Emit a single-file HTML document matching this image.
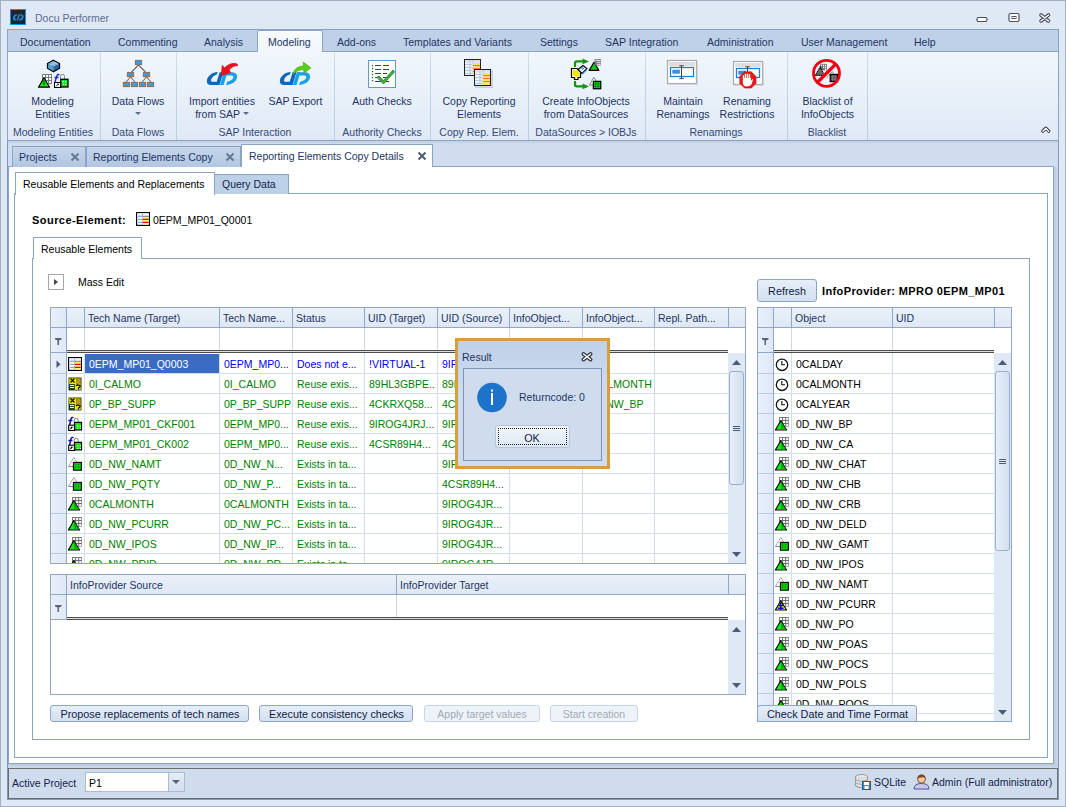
<!DOCTYPE html>
<html><head><meta charset="utf-8"><title>Docu Performer</title>
<style>
html,body{margin:0;padding:0;}
body{width:1066px;height:807px;position:relative;overflow:hidden;font-family:"Liberation Sans", sans-serif;font-size:10.5px;}
body div{position:absolute;}
</style></head><body>
<div style="left:0px;top:0px;width:1066px;height:807px;background:#dfe9f5;"></div>
<div style="left:0px;top:0px;width:1066px;height:807px;box-sizing:border-box;border:1px solid #a3afbd;border-bottom:none;"></div>
<svg style="position:absolute;left:10px;top:9px" width="16" height="16" viewBox="0 0 16 16"><rect x="0.5" y="0.5" width="15" height="15" fill="#1d252d" stroke="#1b8fd6"/><path d="M7 5.2 Q3.6 5.2 3 8.6 Q2.6 11.4 5.2 11.4 L6 11.4 L6.6 9.9 L5.8 9.9 Q4.5 9.9 4.8 8.6 Q5.2 6.8 6.8 6.8 Z" fill="#1f8fe0"/><path d="M8.6 5.2 L6.6 11.4 L8.1 11.4 L10.1 5.2 Z" fill="#1f8fe0"/><path d="M10.3 5.2 Q14 5.2 13.5 8.2 Q13 11.4 9.8 11.4 L9 11.4 L9.5 9.9 Q11.6 9.9 11.9 8.2 Q12.1 6.8 10.6 6.8 Z" fill="#1f8fe0"/></svg>
<div style="left:35px;top:11.86px;font-size:10.5px;line-height:13px;color:#5a6c94;text-align:left;white-space:nowrap;">Docu Performer</div>
<svg style="position:absolute;left:975px;top:12px" width="80" height="14" viewBox="0 0 80 14"><rect x="2" y="5.5" width="10" height="4" rx="1.5" fill="#fff" stroke="#4a4f5c" stroke-width="1.2"/><rect x="34" y="1.5" width="10" height="8" rx="1.5" fill="#fff" stroke="#4a4f5c" stroke-width="1.2"/><rect x="37" y="4.5" width="4" height="2" fill="#fff" stroke="#4a4f5c" stroke-width="1"/><path d="M66 3 L73.5 9 M73.5 3 L66 9" stroke="#4a4f5c" stroke-width="3.6" stroke-linecap="round"/><path d="M66 3 L73.5 9 M73.5 3 L66 9" stroke="#fff" stroke-width="1.5" stroke-linecap="round"/></svg>
<div style="left:7px;top:29px;width:1052px;height:24px;background:#bfd1e8;box-sizing:border-box;border:1px solid #8aa4c6;border-bottom:none;"></div>
<div style="left:7px;top:51px;width:1052px;height:90px;background:linear-gradient(#f1f6fc,#dfe9f5);box-sizing:border-box;border:1px solid #8aa4c6;"></div>
<div style="left:257px;top:30px;width:66px;height:22px;background:linear-gradient(#f7fafd,#f1f6fc);box-sizing:border-box;border:1px solid #8aa4c6;border-bottom:none;border-radius:2px 2px 0 0;"></div>
<div style="left:20px;top:35.86px;font-size:10.5px;line-height:13px;color:#1e3563;text-align:left;white-space:nowrap;">Documentation</div>
<div style="left:118px;top:35.86px;font-size:10.5px;line-height:13px;color:#1e3563;text-align:left;white-space:nowrap;">Commenting</div>
<div style="left:204px;top:35.86px;font-size:10.5px;line-height:13px;color:#1e3563;text-align:left;white-space:nowrap;">Analysis</div>
<div style="left:268px;top:35.86px;font-size:10.5px;line-height:13px;color:#1e3563;text-align:left;white-space:nowrap;">Modeling</div>
<div style="left:337px;top:35.86px;font-size:10.5px;line-height:13px;color:#1e3563;text-align:left;white-space:nowrap;">Add-ons</div>
<div style="left:403px;top:35.86px;font-size:10.5px;line-height:13px;color:#1e3563;text-align:left;white-space:nowrap;">Templates and Variants</div>
<div style="left:540px;top:35.86px;font-size:10.5px;line-height:13px;color:#1e3563;text-align:left;white-space:nowrap;">Settings</div>
<div style="left:605px;top:35.86px;font-size:10.5px;line-height:13px;color:#1e3563;text-align:left;white-space:nowrap;">SAP Integration</div>
<div style="left:707px;top:35.86px;font-size:10.5px;line-height:13px;color:#1e3563;text-align:left;white-space:nowrap;">Administration</div>
<div style="left:801px;top:35.86px;font-size:10.5px;line-height:13px;color:#1e3563;text-align:left;white-space:nowrap;">User Management</div>
<div style="left:914px;top:35.86px;font-size:10.5px;line-height:13px;color:#1e3563;text-align:left;white-space:nowrap;">Help</div>
<div style="left:100px;top:52px;width:1px;height:88px;background:linear-gradient(#d5e0ee,#c3d2e5 30%,#bccde2);"></div>
<div style="left:176px;top:52px;width:1px;height:88px;background:linear-gradient(#d5e0ee,#c3d2e5 30%,#bccde2);"></div>
<div style="left:334px;top:52px;width:1px;height:88px;background:linear-gradient(#d5e0ee,#c3d2e5 30%,#bccde2);"></div>
<div style="left:430px;top:52px;width:1px;height:88px;background:linear-gradient(#d5e0ee,#c3d2e5 30%,#bccde2);"></div>
<div style="left:528px;top:52px;width:1px;height:88px;background:linear-gradient(#d5e0ee,#c3d2e5 30%,#bccde2);"></div>
<div style="left:645px;top:52px;width:1px;height:88px;background:linear-gradient(#d5e0ee,#c3d2e5 30%,#bccde2);"></div>
<div style="left:787px;top:52px;width:1px;height:88px;background:linear-gradient(#d5e0ee,#c3d2e5 30%,#bccde2);"></div>
<div style="left:867px;top:52px;width:1px;height:88px;background:linear-gradient(#d5e0ee,#c3d2e5 30%,#bccde2);"></div>
<div style="left:-97px;top:125.86px;width:300px;font-size:10.5px;line-height:13px;color:#33497a;text-align:center;white-space:nowrap;">Modeling Entities</div>
<div style="left:-12px;top:125.86px;width:300px;font-size:10.5px;line-height:13px;color:#33497a;text-align:center;white-space:nowrap;">Data Flows</div>
<div style="left:105px;top:125.86px;width:300px;font-size:10.5px;line-height:13px;color:#33497a;text-align:center;white-space:nowrap;">SAP Interaction</div>
<div style="left:232px;top:125.86px;width:300px;font-size:10.5px;line-height:13px;color:#33497a;text-align:center;white-space:nowrap;">Authority Checks</div>
<div style="left:329px;top:125.86px;width:300px;font-size:10.5px;line-height:13px;color:#33497a;text-align:center;white-space:nowrap;">Copy Rep. Elem.</div>
<div style="left:436px;top:125.86px;width:300px;font-size:10.5px;line-height:13px;color:#33497a;text-align:center;white-space:nowrap;">DataSources &gt; IOBJs</div>
<div style="left:566px;top:125.86px;width:300px;font-size:10.5px;line-height:13px;color:#33497a;text-align:center;white-space:nowrap;">Renamings</div>
<div style="left:677px;top:125.86px;width:300px;font-size:10.5px;line-height:13px;color:#33497a;text-align:center;white-space:nowrap;">Blacklist</div>
<div style="left:-97.5px;top:94.86px;width:300px;font-size:10.5px;line-height:13px;color:#1d3566;text-align:center;white-space:nowrap;">Modeling</div>
<div style="left:-97.5px;top:107.86px;width:300px;font-size:10.5px;line-height:13px;color:#1d3566;text-align:center;white-space:nowrap;">Entities</div>
<div style="left:-12px;top:94.86px;width:300px;font-size:10.5px;line-height:13px;color:#1d3566;text-align:center;white-space:nowrap;">Data Flows</div>
<svg style="position:absolute;left:134px;top:111px" width="8" height="5" viewBox="0 0 8 5"><path d="M1 1 L7 1 L4 4 Z" fill="#5b6d8c"/></svg>
<div style="left:72px;top:94.86px;width:300px;font-size:10.5px;line-height:13px;color:#1d3566;text-align:center;white-space:nowrap;">Import entities</div>
<div style="left:72px;top:107.86px;width:300px;font-size:10.5px;line-height:13px;color:#1d3566;text-align:center;white-space:nowrap;">from SAP&nbsp;&nbsp;&nbsp;</div>
<svg style="position:absolute;left:242px;top:111px" width="8" height="5" viewBox="0 0 8 5"><path d="M1 1 L7 1 L4 4 Z" fill="#5b6d8c"/></svg>
<div style="left:145.5px;top:94.86px;width:300px;font-size:10.5px;line-height:13px;color:#1d3566;text-align:center;white-space:nowrap;">SAP Export</div>
<div style="left:232px;top:94.86px;width:300px;font-size:10.5px;line-height:13px;color:#1d3566;text-align:center;white-space:nowrap;">Auth Checks</div>
<div style="left:329px;top:94.86px;width:300px;font-size:10.5px;line-height:13px;color:#1d3566;text-align:center;white-space:nowrap;">Copy Reporting</div>
<div style="left:329px;top:107.86px;width:300px;font-size:10.5px;line-height:13px;color:#1d3566;text-align:center;white-space:nowrap;">Elements</div>
<div style="left:436px;top:94.86px;width:300px;font-size:10.5px;line-height:13px;color:#1d3566;text-align:center;white-space:nowrap;">Create InfoObjects</div>
<div style="left:436px;top:107.86px;width:300px;font-size:10.5px;line-height:13px;color:#1d3566;text-align:center;white-space:nowrap;">from DataSources</div>
<div style="left:533px;top:94.86px;width:300px;font-size:10.5px;line-height:13px;color:#1d3566;text-align:center;white-space:nowrap;">Maintain</div>
<div style="left:533px;top:107.86px;width:300px;font-size:10.5px;line-height:13px;color:#1d3566;text-align:center;white-space:nowrap;">Renamings</div>
<div style="left:597px;top:94.86px;width:300px;font-size:10.5px;line-height:13px;color:#1d3566;text-align:center;white-space:nowrap;">Renaming</div>
<div style="left:597px;top:107.86px;width:300px;font-size:10.5px;line-height:13px;color:#1d3566;text-align:center;white-space:nowrap;">Restrictions</div>
<div style="left:677.5px;top:94.86px;width:300px;font-size:10.5px;line-height:13px;color:#1d3566;text-align:center;white-space:nowrap;">Blacklist of</div>
<div style="left:677.5px;top:107.86px;width:300px;font-size:10.5px;line-height:13px;color:#1d3566;text-align:center;white-space:nowrap;">InfoObjects</div>
<svg style="position:absolute;left:1039px;top:123px" width="14" height="12" viewBox="0 0 14 12"><path d="M3.8 8.2 L6.8 5.2 L9.8 8.2" fill="none" stroke="#2a2f3a" stroke-width="3.2" stroke-linecap="round" stroke-linejoin="round"/><path d="M3.8 8.2 L6.8 5.2 L9.8 8.2" fill="none" stroke="#fff" stroke-width="1.3" stroke-linecap="round" stroke-linejoin="round"/></svg>
<div style="left:7px;top:141px;width:1052px;height:659px;background:#d0ddee;box-sizing:border-box;border-left:1px solid #7f99bb;border-right:1px solid #7f99bb;border-bottom:1px solid #7f99bb;"></div>
<div style="left:8px;top:141px;width:1050px;height:3px;background:linear-gradient(#c0cee2,#d0ddee);"></div>
<div style="left:8px;top:166px;width:1046px;height:598px;background:#fff;box-sizing:border-box;border:1px solid #8aa4c6;"></div>
<div style="left:1054px;top:167px;width:4px;height:601px;background:linear-gradient(90deg,#b9c8dc,#cddaea);"></div>
<div style="left:8px;top:764px;width:1050px;height:4px;background:linear-gradient(#b9c8dc,#cddaea);"></div>
<div style="left:12px;top:146px;width:74px;height:21px;background:linear-gradient(#c6d7ec,#b1c6e1);box-sizing:border-box;border:1px solid #8aa4c6;border-bottom:none;"></div>
<div style="left:19px;top:150.86px;font-size:10.5px;line-height:13px;color:#1e3563;text-align:left;white-space:nowrap;">Projects</div>
<svg style="position:absolute;left:70px;top:152px" width="11" height="11" viewBox="0 0 11 11"><path d="M1.5 1.5 L8.5 8.5 M8.5 1.5 L1.5 8.5" stroke="#6a778c" stroke-width="2"/></svg>
<div style="left:86px;top:146px;width:155px;height:21px;background:linear-gradient(#c6d7ec,#b1c6e1);box-sizing:border-box;border:1px solid #8aa4c6;border-bottom:none;"></div>
<div style="left:93px;top:150.86px;font-size:10.5px;line-height:13px;color:#1e3563;text-align:left;white-space:nowrap;">Reporting Elements Copy</div>
<svg style="position:absolute;left:225px;top:152px" width="11" height="11" viewBox="0 0 11 11"><path d="M1.5 1.5 L8.5 8.5 M8.5 1.5 L1.5 8.5" stroke="#6a778c" stroke-width="2"/></svg>
<div style="left:241px;top:144px;width:192px;height:23px;background:#fff;box-sizing:border-box;border:1px solid #8aa4c6;border-bottom:none;"></div>
<div style="left:249px;top:149.86px;font-size:10.5px;line-height:13px;color:#1e3563;text-align:left;white-space:nowrap;">Reporting Elements Copy Details</div>
<svg style="position:absolute;left:417px;top:151px" width="11" height="11" viewBox="0 0 11 11"><path d="M1.5 1.5 L8.5 8.5 M8.5 1.5 L1.5 8.5" stroke="#505b6e" stroke-width="2"/></svg>
<div style="left:14px;top:193px;width:1034px;height:565px;box-sizing:border-box;border:1px solid #8aa4c6;"></div>
<div style="left:15px;top:172px;width:200px;height:23px;background:#fff;box-sizing:border-box;border:1px solid #8aa4c6;border-bottom:none;"></div>
<div style="left:23px;top:177.86px;font-size:10.5px;line-height:13px;color:#000;text-align:left;white-space:nowrap;">Reusable Elements and Replacements</div>
<div style="left:214px;top:174px;width:75px;height:20px;background:#bcd0e8;box-sizing:border-box;border:1px solid #8aa4c6;border-bottom:none;"></div>
<div style="left:222px;top:177.86px;font-size:10.5px;line-height:13px;color:#15234a;text-align:left;white-space:nowrap;">Query Data</div>
<div style="left:32px;top:213.69px;font-size:11px;line-height:13px;color:#000;text-align:left;white-space:nowrap;font-weight:bold;letter-spacing:0.45px;">Source-Element:</div>
<div style="left:153px;top:213.86px;font-size:10.5px;line-height:13px;color:#000;text-align:left;white-space:nowrap;">0EPM_MP01_Q0001</div>
<div style="left:32px;top:258px;width:998px;height:482px;box-sizing:border-box;border:1px solid #8aa4c6;"></div>
<div style="left:33px;top:237px;width:109px;height:22px;background:#fff;box-sizing:border-box;border:1px solid #8aa4c6;border-bottom:none;"></div>
<div style="left:41px;top:242.86px;font-size:10.5px;line-height:13px;color:#000;text-align:left;white-space:nowrap;">Reusable Elements</div>
<div style="left:48px;top:274px;width:16px;height:16px;box-sizing:border-box;border:1px solid #a7a7a7;background:#fff;"></div>
<svg style="position:absolute;left:48px;top:274px" width="16" height="16" viewBox="0 0 16 16"><path d="M6 5 L10 8 L6 11 Z" fill="#444"/></svg>
<div style="left:78px;top:275.86px;font-size:10.5px;line-height:13px;color:#000;text-align:left;white-space:nowrap;">Mass Edit</div>
<div style="left:757px;top:279px;width:60px;height:23px;box-sizing:border-box;border:1px solid #8ea6c6;border-radius:3px;background:linear-gradient(#e6eef8,#d3e0f0);"></div>
<div style="left:637px;top:284.76px;width:300px;font-size:10.8px;line-height:13px;color:#101c44;text-align:center;white-space:nowrap;">Refresh</div>
<div style="left:822px;top:284.69px;font-size:11px;line-height:13px;color:#000;text-align:left;white-space:nowrap;font-weight:bold;letter-spacing:0.38px;">InfoProvider: MPRO 0EPM_MP01</div>
<div style="left:0;top:0;width:1066px;height:564px;overflow:hidden;">
<div style="left:50px;top:307px;width:696px;height:257px;background:#fff;"></div>
<div style="left:50px;top:307px;width:696px;height:21px;background:linear-gradient(#ebf1fa,#dde7f4);"></div>
<div style="left:50px;top:307px;width:16px;height:257px;background:linear-gradient(90deg,#e9f0fa,#dfe8f5);"></div>
<div style="left:84px;top:327px;width:1px;height:23px;background:#d6d6d6;"></div>
<div style="left:219px;top:327px;width:1px;height:23px;background:#d6d6d6;"></div>
<div style="left:292px;top:327px;width:1px;height:23px;background:#d6d6d6;"></div>
<div style="left:364px;top:327px;width:1px;height:23px;background:#d6d6d6;"></div>
<div style="left:437px;top:327px;width:1px;height:23px;background:#d6d6d6;"></div>
<div style="left:509px;top:327px;width:1px;height:23px;background:#d6d6d6;"></div>
<div style="left:582px;top:327px;width:1px;height:23px;background:#d6d6d6;"></div>
<div style="left:654px;top:327px;width:1px;height:23px;background:#d6d6d6;"></div>
<div style="left:66px;top:350px;width:662px;height:1px;background:#4c4c4c;"></div>
<div style="left:66px;top:351px;width:662px;height:1px;background:#e0e0e0;"></div>
<div style="left:66px;top:352px;width:662px;height:1px;background:#4c4c4c;"></div>
<svg style="position:absolute;left:55px;top:338px" width="8" height="8" viewBox="0 0 8 8"><path d="M0 0 H6.5 V1.4 L4 2.6 V7 H2.5 V2.6 L0 1.4 Z" fill="#5a6478"/></svg>
<div style="left:66px;top:373px;width:662px;height:1px;background:#d3deeb;"></div>
<div style="left:50px;top:373px;width:16px;height:1px;background:#b9cbe2;"></div>
<div style="left:66px;top:393px;width:662px;height:1px;background:#d3deeb;"></div>
<div style="left:50px;top:393px;width:16px;height:1px;background:#b9cbe2;"></div>
<div style="left:66px;top:413px;width:662px;height:1px;background:#d3deeb;"></div>
<div style="left:50px;top:413px;width:16px;height:1px;background:#b9cbe2;"></div>
<div style="left:66px;top:433px;width:662px;height:1px;background:#d3deeb;"></div>
<div style="left:50px;top:433px;width:16px;height:1px;background:#b9cbe2;"></div>
<div style="left:66px;top:453px;width:662px;height:1px;background:#d3deeb;"></div>
<div style="left:50px;top:453px;width:16px;height:1px;background:#b9cbe2;"></div>
<div style="left:66px;top:473px;width:662px;height:1px;background:#d3deeb;"></div>
<div style="left:50px;top:473px;width:16px;height:1px;background:#b9cbe2;"></div>
<div style="left:66px;top:493px;width:662px;height:1px;background:#d3deeb;"></div>
<div style="left:50px;top:493px;width:16px;height:1px;background:#b9cbe2;"></div>
<div style="left:66px;top:513px;width:662px;height:1px;background:#d3deeb;"></div>
<div style="left:50px;top:513px;width:16px;height:1px;background:#b9cbe2;"></div>
<div style="left:66px;top:533px;width:662px;height:1px;background:#d3deeb;"></div>
<div style="left:50px;top:533px;width:16px;height:1px;background:#b9cbe2;"></div>
<div style="left:66px;top:553px;width:662px;height:1px;background:#d3deeb;"></div>
<div style="left:50px;top:553px;width:16px;height:1px;background:#b9cbe2;"></div>
<div style="left:50px;top:353px;width:16px;height:0px;"></div>
<div style="left:84px;top:353px;width:1px;height:211px;background:#d3deeb;"></div>
<div style="left:219px;top:353px;width:1px;height:211px;background:#d3deeb;"></div>
<div style="left:292px;top:353px;width:1px;height:211px;background:#d3deeb;"></div>
<div style="left:364px;top:353px;width:1px;height:211px;background:#d3deeb;"></div>
<div style="left:437px;top:353px;width:1px;height:211px;background:#d3deeb;"></div>
<div style="left:509px;top:353px;width:1px;height:211px;background:#d3deeb;"></div>
<div style="left:582px;top:353px;width:1px;height:211px;background:#d3deeb;"></div>
<div style="left:654px;top:353px;width:1px;height:211px;background:#d3deeb;"></div>
<div style="left:50px;top:327px;width:696px;height:1px;background:#8fa8c9;"></div>
<div style="left:66px;top:307px;width:1px;height:20px;background:#8fa8c9;"></div>
<div style="left:84px;top:307px;width:1px;height:20px;background:#8fa8c9;"></div>
<div style="left:219px;top:307px;width:1px;height:20px;background:#8fa8c9;"></div>
<div style="left:292px;top:307px;width:1px;height:20px;background:#8fa8c9;"></div>
<div style="left:364px;top:307px;width:1px;height:20px;background:#8fa8c9;"></div>
<div style="left:437px;top:307px;width:1px;height:20px;background:#8fa8c9;"></div>
<div style="left:509px;top:307px;width:1px;height:20px;background:#8fa8c9;"></div>
<div style="left:582px;top:307px;width:1px;height:20px;background:#8fa8c9;"></div>
<div style="left:654px;top:307px;width:1px;height:20px;background:#8fa8c9;"></div>
<div style="left:728px;top:307px;width:1px;height:20px;background:#8fa8c9;"></div>
<div style="left:66px;top:327px;width:1px;height:237px;background:#8fa8c9;"></div>
<div style="left:50px;top:352px;width:16px;height:1px;background:#8fa8c9;"></div>
<div style="left:70px;top:311.86px;font-size:10.5px;line-height:13px;color:#1e3563;text-align:left;white-space:nowrap;"></div>
<div style="left:88px;top:311.86px;font-size:10.5px;line-height:13px;color:#1e3563;text-align:left;white-space:nowrap;">Tech Name (Target)</div>
<div style="left:223px;top:311.86px;font-size:10.5px;line-height:13px;color:#1e3563;text-align:left;white-space:nowrap;">Tech Name...</div>
<div style="left:296px;top:311.86px;font-size:10.5px;line-height:13px;color:#1e3563;text-align:left;white-space:nowrap;">Status</div>
<div style="left:368px;top:311.86px;font-size:10.5px;line-height:13px;color:#1e3563;text-align:left;white-space:nowrap;">UID (Target)</div>
<div style="left:441px;top:311.86px;font-size:10.5px;line-height:13px;color:#1e3563;text-align:left;white-space:nowrap;">UID (Source)</div>
<div style="left:513px;top:311.86px;font-size:10.5px;line-height:13px;color:#1e3563;text-align:left;white-space:nowrap;">InfoObject...</div>
<div style="left:586px;top:311.86px;font-size:10.5px;line-height:13px;color:#1e3563;text-align:left;white-space:nowrap;">InfoObject...</div>
<div style="left:658px;top:311.86px;font-size:10.5px;line-height:13px;color:#1e3563;text-align:left;white-space:nowrap;">Repl. Path...</div>
<div style="left:728px;top:328px;width:17px;height:25px;background:#fff;"></div>
<div style="left:728px;top:353px;width:17px;height:211px;background:#dfe9f6;"></div>
<svg style="position:absolute;left:731px;top:359px" width="11" height="7" viewBox="0 0 11 7"><path d="M1 6 L5.5 1 L10 6 Z" fill="#4b5b78"/></svg>
<svg style="position:absolute;left:731px;top:551px" width="11" height="7" viewBox="0 0 11 7"><path d="M1 1 L5.5 6 L10 1 Z" fill="#4b5b78"/></svg>
<div style="left:729px;top:371px;width:15px;height:114px;box-sizing:border-box;border:1px solid #98afcd;border-radius:3px;background:linear-gradient(90deg,#e7eef8,#d3dfef);"></div>
<svg style="position:absolute;left:732px;top:425px" width="9" height="7" viewBox="0 0 9 7"><path d="M1 1.5 H8 M1 3.5 H8 M1 5.5 H8" stroke="#4b5b78" stroke-width="1"/></svg>
<svg style="position:absolute;left:66px;top:354px" width="18" height="18" viewBox="0 0 18 18"><rect x="2.6" y="3.6" width="12.8" height="12.8" fill="#fff" stroke="#000" stroke-width="1.2"/><rect x="3.3" y="4.3" width="11.4" height="3" fill="#e4f0fa"/><path d="M4 7.3 H8.4 M4 10.4 H8.4 M4 13.4 H8.4" stroke="#6a8cc8" stroke-width="0.9"/><path d="M8.5 4.3 V16" stroke="#8aa8d8" stroke-width="0.8"/><rect x="8.8" y="7.5" width="5.9" height="8.2" fill="#fbf07a"/><path d="M8.8 7.4 H14.7" stroke="#777" stroke-width="0.9"/><path d="M8.8 10.4 H14.7 M8.8 13.4 H14.7" stroke="#f00000" stroke-width="1.1"/></svg>
<div style="left:85px;top:354px;width:134px;height:19px;background:#3b6cc4;"></div>
<svg style="position:absolute;left:55px;top:360px" width="8" height="10" viewBox="0 0 8 10"><path d="M1.5 0.5 L5.5 4.2 L1.5 8 Z" fill="#4f5a70"/></svg>
<div style="left:84px;top:353px;width:134px;height:20px;overflow:hidden;">
<div style="left:5px;top:4.86px;font-size:10.5px;line-height:13px;color:#fff;text-align:left;white-space:nowrap;">0EPM_MP01_Q0003</div>
</div>
<div style="left:219px;top:353px;width:72px;height:20px;overflow:hidden;">
<div style="left:5px;top:4.86px;font-size:10.5px;line-height:13px;color:#0000f0;text-align:left;white-space:nowrap;">0EPM_MP0...</div>
</div>
<div style="left:292px;top:353px;width:71px;height:20px;overflow:hidden;">
<div style="left:5px;top:4.86px;font-size:10.5px;line-height:13px;color:#0000f0;text-align:left;white-space:nowrap;">Does not e...</div>
</div>
<div style="left:364px;top:353px;width:72px;height:20px;overflow:hidden;">
<div style="left:5px;top:4.86px;font-size:10.5px;line-height:13px;color:#0000f0;text-align:left;white-space:nowrap;">!VIRTUAL-1</div>
</div>
<div style="left:437px;top:353px;width:71px;height:20px;overflow:hidden;">
<div style="left:5px;top:4.86px;font-size:10.5px;line-height:13px;color:#0000f0;text-align:left;white-space:nowrap;">9IROG4JR...</div>
</div>
<svg style="position:absolute;left:66px;top:374px" width="18" height="18" viewBox="0 0 18 18"><rect x="2.6" y="3.6" width="12.8" height="12.8" fill="#000"/><rect x="3.2" y="4.2" width="7" height="6" fill="#f4ec00"/><rect x="10.2" y="4.2" width="4.6" height="6" fill="#b89c00"/><rect x="3.2" y="10.2" width="5.6" height="5.6" fill="#1f5010"/><rect x="8.8" y="10.2" width="6" height="5.6" fill="#f4ec00"/><path d="M4.5 4.5 L8.5 8.5 M8.5 4.5 L4.5 8.5" stroke="#000" stroke-width="1.1"/><path d="M4 11.5 H8 M4 13.5 H8" stroke="#fff" stroke-width="0.9"/><path d="M10 12 L11.5 11 L14 11.5 L14 13 L12.5 14 V15.5" fill="none" stroke="#000" stroke-width="1.2"/></svg>
<div style="left:84px;top:373px;width:134px;height:20px;overflow:hidden;">
<div style="left:5px;top:4.86px;font-size:10.5px;line-height:13px;color:#008000;text-align:left;white-space:nowrap;">0I_CALMO</div>
</div>
<div style="left:219px;top:373px;width:72px;height:20px;overflow:hidden;">
<div style="left:5px;top:4.86px;font-size:10.5px;line-height:13px;color:#008000;text-align:left;white-space:nowrap;">0I_CALMO</div>
</div>
<div style="left:292px;top:373px;width:71px;height:20px;overflow:hidden;">
<div style="left:5px;top:4.86px;font-size:10.5px;line-height:13px;color:#008000;text-align:left;white-space:nowrap;">Reuse exis...</div>
</div>
<div style="left:364px;top:373px;width:72px;height:20px;overflow:hidden;">
<div style="left:5px;top:4.86px;font-size:10.5px;line-height:13px;color:#008000;text-align:left;white-space:nowrap;">89HL3GBPE...</div>
</div>
<div style="left:437px;top:373px;width:71px;height:20px;overflow:hidden;">
<div style="left:5px;top:4.86px;font-size:10.5px;line-height:13px;color:#008000;text-align:left;white-space:nowrap;">89HL3GBPE...</div>
</div>
<div style="left:582px;top:373px;width:71px;height:20px;overflow:hidden;">
<div style="left:5px;top:4.86px;font-size:10.5px;line-height:13px;color:#008000;text-align:left;white-space:nowrap;">0CALMONTH</div>
</div>
<svg style="position:absolute;left:66px;top:394px" width="18" height="18" viewBox="0 0 18 18"><rect x="2.6" y="3.6" width="12.8" height="12.8" fill="#000"/><rect x="3.2" y="4.2" width="7" height="6" fill="#f4ec00"/><rect x="10.2" y="4.2" width="4.6" height="6" fill="#b89c00"/><rect x="3.2" y="10.2" width="5.6" height="5.6" fill="#1f5010"/><rect x="8.8" y="10.2" width="6" height="5.6" fill="#f4ec00"/><path d="M4.5 4.5 L8.5 8.5 M8.5 4.5 L4.5 8.5" stroke="#000" stroke-width="1.1"/><path d="M4 11.5 H8 M4 13.5 H8" stroke="#fff" stroke-width="0.9"/><path d="M10 12 L11.5 11 L14 11.5 L14 13 L12.5 14 V15.5" fill="none" stroke="#000" stroke-width="1.2"/></svg>
<div style="left:84px;top:393px;width:134px;height:20px;overflow:hidden;">
<div style="left:5px;top:4.86px;font-size:10.5px;line-height:13px;color:#008000;text-align:left;white-space:nowrap;">0P_BP_SUPP</div>
</div>
<div style="left:219px;top:393px;width:72px;height:20px;overflow:hidden;">
<div style="left:5px;top:4.86px;font-size:10.5px;line-height:13px;color:#008000;text-align:left;white-space:nowrap;">0P_BP_SUPP</div>
</div>
<div style="left:292px;top:393px;width:71px;height:20px;overflow:hidden;">
<div style="left:5px;top:4.86px;font-size:10.5px;line-height:13px;color:#008000;text-align:left;white-space:nowrap;">Reuse exis...</div>
</div>
<div style="left:364px;top:393px;width:72px;height:20px;overflow:hidden;">
<div style="left:5px;top:4.86px;font-size:10.5px;line-height:13px;color:#008000;text-align:left;white-space:nowrap;">4CKRXQ58...</div>
</div>
<div style="left:437px;top:393px;width:71px;height:20px;overflow:hidden;">
<div style="left:5px;top:4.86px;font-size:10.5px;line-height:13px;color:#008000;text-align:left;white-space:nowrap;">4CKRXQ58...</div>
</div>
<div style="left:582px;top:393px;width:71px;height:20px;overflow:hidden;">
<div style="left:5px;top:4.86px;font-size:10.5px;line-height:13px;color:#008000;text-align:left;white-space:nowrap;">0D_NW_BP</div>
</div>
<svg style="position:absolute;left:66px;top:414px" width="18" height="18" viewBox="0 0 18 18"><path d="M8.2 11 V6.5 Q8.2 4.2 10.2 4.2 Q12.2 4.2 12.2 6.5 V9" fill="none" stroke="#777" stroke-width="1"/><path d="M7.6 3.6 Q5.2 2.8 4.8 5.5 L3.6 11 M2.3 6.6 H6.4" fill="none" stroke="#1010b0" stroke-width="1.5"/><rect x="2.7" y="11.2" width="5.8" height="5.3" fill="#fff" stroke="#000" stroke-width="1.1"/><path d="M4.4 14.8 L6.4 12.8" stroke="#000" stroke-width="1.3"/><rect x="8.6" y="8.4" width="6.9" height="7.5" fill="#18f018" stroke="#000" stroke-width="1.2"/><path d="M11.4 11.4 h1 v1 h-1z M14 11.4 h1 v1 h-1z M11.4 14 h1 v1 h-1z M14 14 h1 v1 h-1z" fill="#fff"/></svg>
<div style="left:84px;top:413px;width:134px;height:20px;overflow:hidden;">
<div style="left:5px;top:4.86px;font-size:10.5px;line-height:13px;color:#008000;text-align:left;white-space:nowrap;">0EPM_MP01_CKF001</div>
</div>
<div style="left:219px;top:413px;width:72px;height:20px;overflow:hidden;">
<div style="left:5px;top:4.86px;font-size:10.5px;line-height:13px;color:#008000;text-align:left;white-space:nowrap;">0EPM_MP0...</div>
</div>
<div style="left:292px;top:413px;width:71px;height:20px;overflow:hidden;">
<div style="left:5px;top:4.86px;font-size:10.5px;line-height:13px;color:#008000;text-align:left;white-space:nowrap;">Reuse exis...</div>
</div>
<div style="left:364px;top:413px;width:72px;height:20px;overflow:hidden;">
<div style="left:5px;top:4.86px;font-size:10.5px;line-height:13px;color:#008000;text-align:left;white-space:nowrap;">9IROG4JRJ...</div>
</div>
<div style="left:437px;top:413px;width:71px;height:20px;overflow:hidden;">
<div style="left:5px;top:4.86px;font-size:10.5px;line-height:13px;color:#008000;text-align:left;white-space:nowrap;">9IROG4JRJ...</div>
</div>
<svg style="position:absolute;left:66px;top:434px" width="18" height="18" viewBox="0 0 18 18"><path d="M8.2 11 V6.5 Q8.2 4.2 10.2 4.2 Q12.2 4.2 12.2 6.5 V9" fill="none" stroke="#777" stroke-width="1"/><path d="M7.6 3.6 Q5.2 2.8 4.8 5.5 L3.6 11 M2.3 6.6 H6.4" fill="none" stroke="#1010b0" stroke-width="1.5"/><rect x="2.7" y="11.2" width="5.8" height="5.3" fill="#fff" stroke="#000" stroke-width="1.1"/><path d="M4.4 14.8 L6.4 12.8" stroke="#000" stroke-width="1.3"/><rect x="8.6" y="8.4" width="6.9" height="7.5" fill="#18f018" stroke="#000" stroke-width="1.2"/><path d="M11.4 11.4 h1 v1 h-1z M14 11.4 h1 v1 h-1z M11.4 14 h1 v1 h-1z M14 14 h1 v1 h-1z" fill="#fff"/></svg>
<div style="left:84px;top:433px;width:134px;height:20px;overflow:hidden;">
<div style="left:5px;top:4.86px;font-size:10.5px;line-height:13px;color:#008000;text-align:left;white-space:nowrap;">0EPM_MP01_CK002</div>
</div>
<div style="left:219px;top:433px;width:72px;height:20px;overflow:hidden;">
<div style="left:5px;top:4.86px;font-size:10.5px;line-height:13px;color:#008000;text-align:left;white-space:nowrap;">0EPM_MP0...</div>
</div>
<div style="left:292px;top:433px;width:71px;height:20px;overflow:hidden;">
<div style="left:5px;top:4.86px;font-size:10.5px;line-height:13px;color:#008000;text-align:left;white-space:nowrap;">Reuse exis...</div>
</div>
<div style="left:364px;top:433px;width:72px;height:20px;overflow:hidden;">
<div style="left:5px;top:4.86px;font-size:10.5px;line-height:13px;color:#008000;text-align:left;white-space:nowrap;">4CSR89H4...</div>
</div>
<div style="left:437px;top:433px;width:71px;height:20px;overflow:hidden;">
<div style="left:5px;top:4.86px;font-size:10.5px;line-height:13px;color:#008000;text-align:left;white-space:nowrap;">4CSR89H4...</div>
</div>
<svg style="position:absolute;left:66px;top:454px" width="18" height="18" viewBox="0 0 18 18"><path d="M2.4 12.5 L7.9 3.4 L11 8.5" fill="#fff" stroke="#8a8a8a" stroke-width="1" stroke-dasharray="1.4 0.5"/><path d="M2.4 12.5 H7" stroke="#8a8a8a" stroke-width="1"/><rect x="7.4" y="8.4" width="8" height="7.8" fill="#00dc00" stroke="#000" stroke-width="1.1"/><path d="M9.6 9 V15.6 M12.5 9 V15.6 M8 10.3 H14.8 M8 12.8 H14.8" stroke="#0a9a0a" stroke-width="0.7"/></svg>
<div style="left:84px;top:453px;width:134px;height:20px;overflow:hidden;">
<div style="left:5px;top:4.86px;font-size:10.5px;line-height:13px;color:#008000;text-align:left;white-space:nowrap;">0D_NW_NAMT</div>
</div>
<div style="left:219px;top:453px;width:72px;height:20px;overflow:hidden;">
<div style="left:5px;top:4.86px;font-size:10.5px;line-height:13px;color:#008000;text-align:left;white-space:nowrap;">0D_NW_N...</div>
</div>
<div style="left:292px;top:453px;width:71px;height:20px;overflow:hidden;">
<div style="left:5px;top:4.86px;font-size:10.5px;line-height:13px;color:#008000;text-align:left;white-space:nowrap;">Exists in ta...</div>
</div>
<div style="left:437px;top:453px;width:71px;height:20px;overflow:hidden;">
<div style="left:5px;top:4.86px;font-size:10.5px;line-height:13px;color:#008000;text-align:left;white-space:nowrap;">9IROG4JR...</div>
</div>
<svg style="position:absolute;left:66px;top:474px" width="18" height="18" viewBox="0 0 18 18"><path d="M2.4 12.5 L7.9 3.4 L11 8.5" fill="#fff" stroke="#8a8a8a" stroke-width="1" stroke-dasharray="1.4 0.5"/><path d="M2.4 12.5 H7" stroke="#8a8a8a" stroke-width="1"/><rect x="7.4" y="8.4" width="8" height="7.8" fill="#00dc00" stroke="#000" stroke-width="1.1"/><path d="M9.6 9 V15.6 M12.5 9 V15.6 M8 10.3 H14.8 M8 12.8 H14.8" stroke="#0a9a0a" stroke-width="0.7"/></svg>
<div style="left:84px;top:473px;width:134px;height:20px;overflow:hidden;">
<div style="left:5px;top:4.86px;font-size:10.5px;line-height:13px;color:#008000;text-align:left;white-space:nowrap;">0D_NW_PQTY</div>
</div>
<div style="left:219px;top:473px;width:72px;height:20px;overflow:hidden;">
<div style="left:5px;top:4.86px;font-size:10.5px;line-height:13px;color:#008000;text-align:left;white-space:nowrap;">0D_NW_P...</div>
</div>
<div style="left:292px;top:473px;width:71px;height:20px;overflow:hidden;">
<div style="left:5px;top:4.86px;font-size:10.5px;line-height:13px;color:#008000;text-align:left;white-space:nowrap;">Exists in ta...</div>
</div>
<div style="left:437px;top:473px;width:71px;height:20px;overflow:hidden;">
<div style="left:5px;top:4.86px;font-size:10.5px;line-height:13px;color:#008000;text-align:left;white-space:nowrap;">4CSR89H4...</div>
</div>
<svg style="position:absolute;left:66px;top:494px" width="18" height="18" viewBox="0 0 18 18"><rect x="6.1" y="3.1" width="9.8" height="9.5" fill="#6e6e6e"/><rect x="7.0" y="4.0" width="2.1" height="2" fill="#fff"/><rect x="7.0" y="7.0" width="2.1" height="2" fill="#fff"/><rect x="7.0" y="10.0" width="2.1" height="2" fill="#fff"/><rect x="10.1" y="4.0" width="2.1" height="2" fill="#fff"/><rect x="10.1" y="7.0" width="2.1" height="2" fill="#fff"/><rect x="10.1" y="10.0" width="2.1" height="2" fill="#fff"/><rect x="13.2" y="4.0" width="2.1" height="2" fill="#fff"/><rect x="13.2" y="7.0" width="2.1" height="2" fill="#fff"/><rect x="13.2" y="10.0" width="2.1" height="2" fill="#fff"/><path d="M2.4 16 L7.7 6.8 L13.6 16 Z" fill="#00f000" stroke="#000" stroke-width="1.2" stroke-linejoin="round"/><path d="M8 7.8 L13 15.4 H8 Z" fill="#00a800"/><path d="M4 15 H12.5 M5 13.6 H11" stroke="#8ab88a" stroke-width="0.7" stroke-dasharray="0.8 0.8"/></svg>
<div style="left:84px;top:493px;width:134px;height:20px;overflow:hidden;">
<div style="left:5px;top:4.86px;font-size:10.5px;line-height:13px;color:#008000;text-align:left;white-space:nowrap;">0CALMONTH</div>
</div>
<div style="left:219px;top:493px;width:72px;height:20px;overflow:hidden;">
<div style="left:5px;top:4.86px;font-size:10.5px;line-height:13px;color:#008000;text-align:left;white-space:nowrap;">0CALMONTH</div>
</div>
<div style="left:292px;top:493px;width:71px;height:20px;overflow:hidden;">
<div style="left:5px;top:4.86px;font-size:10.5px;line-height:13px;color:#008000;text-align:left;white-space:nowrap;">Exists in ta...</div>
</div>
<div style="left:437px;top:493px;width:71px;height:20px;overflow:hidden;">
<div style="left:5px;top:4.86px;font-size:10.5px;line-height:13px;color:#008000;text-align:left;white-space:nowrap;">9IROG4JR...</div>
</div>
<svg style="position:absolute;left:66px;top:514px" width="18" height="18" viewBox="0 0 18 18"><rect x="6.1" y="3.1" width="9.8" height="9.5" fill="#6e6e6e"/><rect x="7.0" y="4.0" width="2.1" height="2" fill="#fff"/><rect x="7.0" y="7.0" width="2.1" height="2" fill="#fff"/><rect x="7.0" y="10.0" width="2.1" height="2" fill="#fff"/><rect x="10.1" y="4.0" width="2.1" height="2" fill="#fff"/><rect x="10.1" y="7.0" width="2.1" height="2" fill="#fff"/><rect x="10.1" y="10.0" width="2.1" height="2" fill="#fff"/><rect x="13.2" y="4.0" width="2.1" height="2" fill="#fff"/><rect x="13.2" y="7.0" width="2.1" height="2" fill="#fff"/><rect x="13.2" y="10.0" width="2.1" height="2" fill="#fff"/><path d="M2.4 16 L7.7 6.8 L13.6 16 Z" fill="#00f000" stroke="#000" stroke-width="1.2" stroke-linejoin="round"/><path d="M8 7.8 L13 15.4 H8 Z" fill="#00a800"/><path d="M4 15 H12.5 M5 13.6 H11" stroke="#8ab88a" stroke-width="0.7" stroke-dasharray="0.8 0.8"/></svg>
<div style="left:84px;top:513px;width:134px;height:20px;overflow:hidden;">
<div style="left:5px;top:4.86px;font-size:10.5px;line-height:13px;color:#008000;text-align:left;white-space:nowrap;">0D_NW_PCURR</div>
</div>
<div style="left:219px;top:513px;width:72px;height:20px;overflow:hidden;">
<div style="left:5px;top:4.86px;font-size:10.5px;line-height:13px;color:#008000;text-align:left;white-space:nowrap;">0D_NW_PC...</div>
</div>
<div style="left:292px;top:513px;width:71px;height:20px;overflow:hidden;">
<div style="left:5px;top:4.86px;font-size:10.5px;line-height:13px;color:#008000;text-align:left;white-space:nowrap;">Exists in ta...</div>
</div>
<div style="left:437px;top:513px;width:71px;height:20px;overflow:hidden;">
<div style="left:5px;top:4.86px;font-size:10.5px;line-height:13px;color:#008000;text-align:left;white-space:nowrap;">9IROG4JR...</div>
</div>
<svg style="position:absolute;left:66px;top:534px" width="18" height="18" viewBox="0 0 18 18"><rect x="6.1" y="3.1" width="9.8" height="9.5" fill="#6e6e6e"/><rect x="7.0" y="4.0" width="2.1" height="2" fill="#fff"/><rect x="7.0" y="7.0" width="2.1" height="2" fill="#fff"/><rect x="7.0" y="10.0" width="2.1" height="2" fill="#fff"/><rect x="10.1" y="4.0" width="2.1" height="2" fill="#fff"/><rect x="10.1" y="7.0" width="2.1" height="2" fill="#fff"/><rect x="10.1" y="10.0" width="2.1" height="2" fill="#fff"/><rect x="13.2" y="4.0" width="2.1" height="2" fill="#fff"/><rect x="13.2" y="7.0" width="2.1" height="2" fill="#fff"/><rect x="13.2" y="10.0" width="2.1" height="2" fill="#fff"/><path d="M2.4 16 L7.7 6.8 L13.6 16 Z" fill="#00f000" stroke="#000" stroke-width="1.2" stroke-linejoin="round"/><path d="M8 7.8 L13 15.4 H8 Z" fill="#00a800"/><path d="M4 15 H12.5 M5 13.6 H11" stroke="#8ab88a" stroke-width="0.7" stroke-dasharray="0.8 0.8"/></svg>
<div style="left:84px;top:533px;width:134px;height:20px;overflow:hidden;">
<div style="left:5px;top:4.86px;font-size:10.5px;line-height:13px;color:#008000;text-align:left;white-space:nowrap;">0D_NW_IPOS</div>
</div>
<div style="left:219px;top:533px;width:72px;height:20px;overflow:hidden;">
<div style="left:5px;top:4.86px;font-size:10.5px;line-height:13px;color:#008000;text-align:left;white-space:nowrap;">0D_NW_IP...</div>
</div>
<div style="left:292px;top:533px;width:71px;height:20px;overflow:hidden;">
<div style="left:5px;top:4.86px;font-size:10.5px;line-height:13px;color:#008000;text-align:left;white-space:nowrap;">Exists in ta...</div>
</div>
<div style="left:437px;top:533px;width:71px;height:20px;overflow:hidden;">
<div style="left:5px;top:4.86px;font-size:10.5px;line-height:13px;color:#008000;text-align:left;white-space:nowrap;">9IROG4JR...</div>
</div>
<svg style="position:absolute;left:66px;top:554px" width="18" height="18" viewBox="0 0 18 18"><rect x="6.1" y="3.1" width="9.8" height="9.5" fill="#6e6e6e"/><rect x="7.0" y="4.0" width="2.1" height="2" fill="#fff"/><rect x="7.0" y="7.0" width="2.1" height="2" fill="#fff"/><rect x="7.0" y="10.0" width="2.1" height="2" fill="#fff"/><rect x="10.1" y="4.0" width="2.1" height="2" fill="#fff"/><rect x="10.1" y="7.0" width="2.1" height="2" fill="#fff"/><rect x="10.1" y="10.0" width="2.1" height="2" fill="#fff"/><rect x="13.2" y="4.0" width="2.1" height="2" fill="#fff"/><rect x="13.2" y="7.0" width="2.1" height="2" fill="#fff"/><rect x="13.2" y="10.0" width="2.1" height="2" fill="#fff"/><path d="M2.4 16 L7.7 6.8 L13.6 16 Z" fill="#00f000" stroke="#000" stroke-width="1.2" stroke-linejoin="round"/><path d="M8 7.8 L13 15.4 H8 Z" fill="#00a800"/><path d="M4 15 H12.5 M5 13.6 H11" stroke="#8ab88a" stroke-width="0.7" stroke-dasharray="0.8 0.8"/></svg>
<div style="left:84px;top:553px;width:134px;height:20px;overflow:hidden;">
<div style="left:5px;top:4.86px;font-size:10.5px;line-height:13px;color:#008000;text-align:left;white-space:nowrap;">0D_NW_PRID</div>
</div>
<div style="left:219px;top:553px;width:72px;height:20px;overflow:hidden;">
<div style="left:5px;top:4.86px;font-size:10.5px;line-height:13px;color:#008000;text-align:left;white-space:nowrap;">0D_NW_PR...</div>
</div>
<div style="left:292px;top:553px;width:71px;height:20px;overflow:hidden;">
<div style="left:5px;top:4.86px;font-size:10.5px;line-height:13px;color:#008000;text-align:left;white-space:nowrap;">Exists in ta...</div>
</div>
<div style="left:437px;top:553px;width:71px;height:20px;overflow:hidden;">
<div style="left:5px;top:4.86px;font-size:10.5px;line-height:13px;color:#008000;text-align:left;white-space:nowrap;">9IROG4JR...</div>
</div>
<div style="left:50px;top:307px;width:696px;height:257px;box-sizing:border-box;border:1px solid #8fa8c9;"></div>
</div>
<div style="left:50px;top:574px;width:696px;height:121px;background:#fff;"></div>
<div style="left:50px;top:574px;width:696px;height:21px;background:linear-gradient(#ebf1fa,#dde7f4);"></div>
<div style="left:50px;top:574px;width:16px;height:46px;background:linear-gradient(90deg,#e9f0fa,#dfe8f5);"></div>
<div style="left:396px;top:594px;width:1px;height:23px;background:#d6d6d6;"></div>
<div style="left:66px;top:617px;width:662px;height:1px;background:#4c4c4c;"></div>
<div style="left:66px;top:618px;width:662px;height:1px;background:#e0e0e0;"></div>
<div style="left:66px;top:619px;width:662px;height:1px;background:#4c4c4c;"></div>
<svg style="position:absolute;left:55px;top:605px" width="8" height="8" viewBox="0 0 8 8"><path d="M0 0 H6.5 V1.4 L4 2.6 V7 H2.5 V2.6 L0 1.4 Z" fill="#5a6478"/></svg>
<div style="left:50px;top:620px;width:16px;height:0px;"></div>
<div style="left:50px;top:594px;width:696px;height:1px;background:#8fa8c9;"></div>
<div style="left:66px;top:574px;width:1px;height:20px;background:#8fa8c9;"></div>
<div style="left:396px;top:574px;width:1px;height:20px;background:#8fa8c9;"></div>
<div style="left:728px;top:574px;width:1px;height:20px;background:#8fa8c9;"></div>
<div style="left:66px;top:594px;width:1px;height:26px;background:#8fa8c9;"></div>
<div style="left:50px;top:619px;width:16px;height:1px;background:#8fa8c9;"></div>
<div style="left:70px;top:578.86px;font-size:10.5px;line-height:13px;color:#1e3563;text-align:left;white-space:nowrap;">InfoProvider Source</div>
<div style="left:400px;top:578.86px;font-size:10.5px;line-height:13px;color:#1e3563;text-align:left;white-space:nowrap;">InfoProvider Target</div>
<div style="left:728px;top:595px;width:17px;height:25px;background:#fff;"></div>
<div style="left:728px;top:620px;width:17px;height:75px;background:#dfe9f6;"></div>
<svg style="position:absolute;left:731px;top:626px" width="11" height="7" viewBox="0 0 11 7"><path d="M1 6 L5.5 1 L10 6 Z" fill="#4b5b78"/></svg>
<svg style="position:absolute;left:731px;top:682px" width="11" height="7" viewBox="0 0 11 7"><path d="M1 1 L5.5 6 L10 1 Z" fill="#4b5b78"/></svg>
<div style="left:50px;top:574px;width:696px;height:121px;box-sizing:border-box;border:1px solid #8fa8c9;"></div>
<div style="left:0;top:0;width:1066px;height:722px;overflow:hidden;">
<div style="left:757px;top:307px;width:255px;height:415px;background:#fff;"></div>
<div style="left:757px;top:307px;width:255px;height:21px;background:linear-gradient(#ebf1fa,#dde7f4);"></div>
<div style="left:757px;top:307px;width:16px;height:415px;background:linear-gradient(90deg,#e9f0fa,#dfe8f5);"></div>
<div style="left:791px;top:327px;width:1px;height:23px;background:#d6d6d6;"></div>
<div style="left:892px;top:327px;width:1px;height:23px;background:#d6d6d6;"></div>
<div style="left:773px;top:350px;width:221px;height:1px;background:#4c4c4c;"></div>
<div style="left:773px;top:351px;width:221px;height:1px;background:#e0e0e0;"></div>
<div style="left:773px;top:352px;width:221px;height:1px;background:#4c4c4c;"></div>
<svg style="position:absolute;left:762px;top:338px" width="8" height="8" viewBox="0 0 8 8"><path d="M0 0 H6.5 V1.4 L4 2.6 V7 H2.5 V2.6 L0 1.4 Z" fill="#5a6478"/></svg>
<div style="left:773px;top:373px;width:221px;height:1px;background:#d3deeb;"></div>
<div style="left:757px;top:373px;width:16px;height:1px;background:#b9cbe2;"></div>
<div style="left:773px;top:393px;width:221px;height:1px;background:#d3deeb;"></div>
<div style="left:757px;top:393px;width:16px;height:1px;background:#b9cbe2;"></div>
<div style="left:773px;top:413px;width:221px;height:1px;background:#d3deeb;"></div>
<div style="left:757px;top:413px;width:16px;height:1px;background:#b9cbe2;"></div>
<div style="left:773px;top:433px;width:221px;height:1px;background:#d3deeb;"></div>
<div style="left:757px;top:433px;width:16px;height:1px;background:#b9cbe2;"></div>
<div style="left:773px;top:453px;width:221px;height:1px;background:#d3deeb;"></div>
<div style="left:757px;top:453px;width:16px;height:1px;background:#b9cbe2;"></div>
<div style="left:773px;top:473px;width:221px;height:1px;background:#d3deeb;"></div>
<div style="left:757px;top:473px;width:16px;height:1px;background:#b9cbe2;"></div>
<div style="left:773px;top:493px;width:221px;height:1px;background:#d3deeb;"></div>
<div style="left:757px;top:493px;width:16px;height:1px;background:#b9cbe2;"></div>
<div style="left:773px;top:513px;width:221px;height:1px;background:#d3deeb;"></div>
<div style="left:757px;top:513px;width:16px;height:1px;background:#b9cbe2;"></div>
<div style="left:773px;top:533px;width:221px;height:1px;background:#d3deeb;"></div>
<div style="left:757px;top:533px;width:16px;height:1px;background:#b9cbe2;"></div>
<div style="left:773px;top:553px;width:221px;height:1px;background:#d3deeb;"></div>
<div style="left:757px;top:553px;width:16px;height:1px;background:#b9cbe2;"></div>
<div style="left:773px;top:573px;width:221px;height:1px;background:#d3deeb;"></div>
<div style="left:757px;top:573px;width:16px;height:1px;background:#b9cbe2;"></div>
<div style="left:773px;top:593px;width:221px;height:1px;background:#d3deeb;"></div>
<div style="left:757px;top:593px;width:16px;height:1px;background:#b9cbe2;"></div>
<div style="left:773px;top:613px;width:221px;height:1px;background:#d3deeb;"></div>
<div style="left:757px;top:613px;width:16px;height:1px;background:#b9cbe2;"></div>
<div style="left:773px;top:633px;width:221px;height:1px;background:#d3deeb;"></div>
<div style="left:757px;top:633px;width:16px;height:1px;background:#b9cbe2;"></div>
<div style="left:773px;top:653px;width:221px;height:1px;background:#d3deeb;"></div>
<div style="left:757px;top:653px;width:16px;height:1px;background:#b9cbe2;"></div>
<div style="left:773px;top:673px;width:221px;height:1px;background:#d3deeb;"></div>
<div style="left:757px;top:673px;width:16px;height:1px;background:#b9cbe2;"></div>
<div style="left:773px;top:693px;width:221px;height:1px;background:#d3deeb;"></div>
<div style="left:757px;top:693px;width:16px;height:1px;background:#b9cbe2;"></div>
<div style="left:773px;top:713px;width:221px;height:1px;background:#d3deeb;"></div>
<div style="left:757px;top:713px;width:16px;height:1px;background:#b9cbe2;"></div>
<div style="left:757px;top:353px;width:16px;height:0px;"></div>
<div style="left:791px;top:353px;width:1px;height:369px;background:#d3deeb;"></div>
<div style="left:892px;top:353px;width:1px;height:369px;background:#d3deeb;"></div>
<div style="left:757px;top:327px;width:255px;height:1px;background:#8fa8c9;"></div>
<div style="left:773px;top:307px;width:1px;height:20px;background:#8fa8c9;"></div>
<div style="left:791px;top:307px;width:1px;height:20px;background:#8fa8c9;"></div>
<div style="left:892px;top:307px;width:1px;height:20px;background:#8fa8c9;"></div>
<div style="left:994px;top:307px;width:1px;height:20px;background:#8fa8c9;"></div>
<div style="left:773px;top:327px;width:1px;height:395px;background:#8fa8c9;"></div>
<div style="left:757px;top:352px;width:16px;height:1px;background:#8fa8c9;"></div>
<div style="left:777px;top:311.86px;font-size:10.5px;line-height:13px;color:#1e3563;text-align:left;white-space:nowrap;"></div>
<div style="left:795px;top:311.86px;font-size:10.5px;line-height:13px;color:#1e3563;text-align:left;white-space:nowrap;">Object</div>
<div style="left:896px;top:311.86px;font-size:10.5px;line-height:13px;color:#1e3563;text-align:left;white-space:nowrap;">UID</div>
<div style="left:994px;top:328px;width:17px;height:25px;background:#fff;"></div>
<div style="left:994px;top:353px;width:17px;height:369px;background:#dfe9f6;"></div>
<svg style="position:absolute;left:997px;top:359px" width="11" height="7" viewBox="0 0 11 7"><path d="M1 6 L5.5 1 L10 6 Z" fill="#4b5b78"/></svg>
<svg style="position:absolute;left:997px;top:709px" width="11" height="7" viewBox="0 0 11 7"><path d="M1 1 L5.5 6 L10 1 Z" fill="#4b5b78"/></svg>
<div style="left:995px;top:371px;width:15px;height:180px;box-sizing:border-box;border:1px solid #98afcd;border-radius:3px;background:linear-gradient(90deg,#e7eef8,#d3dfef);"></div>
<svg style="position:absolute;left:998px;top:458px" width="9" height="7" viewBox="0 0 9 7"><path d="M1 1.5 H8 M1 3.5 H8 M1 5.5 H8" stroke="#4b5b78" stroke-width="1"/></svg>
<svg style="position:absolute;left:773px;top:354px" width="18" height="18" viewBox="0 0 18 18"><circle cx="9" cy="10.8" r="5.7" fill="#fff" stroke="#111" stroke-width="1.3"/><path d="M8.8 7 V10.8 H12" fill="none" stroke="#111" stroke-width="1.1"/></svg>
<div style="left:791px;top:353px;width:100px;height:20px;overflow:hidden;">
<div style="left:5px;top:4.86px;font-size:10.5px;line-height:13px;color:#000;text-align:left;white-space:nowrap;">0CALDAY</div>
</div>
<svg style="position:absolute;left:773px;top:374px" width="18" height="18" viewBox="0 0 18 18"><circle cx="9" cy="10.8" r="5.7" fill="#fff" stroke="#111" stroke-width="1.3"/><path d="M8.8 7 V10.8 H12" fill="none" stroke="#111" stroke-width="1.1"/></svg>
<div style="left:791px;top:373px;width:100px;height:20px;overflow:hidden;">
<div style="left:5px;top:4.86px;font-size:10.5px;line-height:13px;color:#000;text-align:left;white-space:nowrap;">0CALMONTH</div>
</div>
<svg style="position:absolute;left:773px;top:394px" width="18" height="18" viewBox="0 0 18 18"><circle cx="9" cy="10.8" r="5.7" fill="#fff" stroke="#111" stroke-width="1.3"/><path d="M8.8 7 V10.8 H12" fill="none" stroke="#111" stroke-width="1.1"/></svg>
<div style="left:791px;top:393px;width:100px;height:20px;overflow:hidden;">
<div style="left:5px;top:4.86px;font-size:10.5px;line-height:13px;color:#000;text-align:left;white-space:nowrap;">0CALYEAR</div>
</div>
<svg style="position:absolute;left:773px;top:414px" width="18" height="18" viewBox="0 0 18 18"><rect x="6.1" y="3.1" width="9.8" height="9.5" fill="#6e6e6e"/><rect x="7.0" y="4.0" width="2.1" height="2" fill="#fff"/><rect x="7.0" y="7.0" width="2.1" height="2" fill="#fff"/><rect x="7.0" y="10.0" width="2.1" height="2" fill="#fff"/><rect x="10.1" y="4.0" width="2.1" height="2" fill="#fff"/><rect x="10.1" y="7.0" width="2.1" height="2" fill="#fff"/><rect x="10.1" y="10.0" width="2.1" height="2" fill="#fff"/><rect x="13.2" y="4.0" width="2.1" height="2" fill="#fff"/><rect x="13.2" y="7.0" width="2.1" height="2" fill="#fff"/><rect x="13.2" y="10.0" width="2.1" height="2" fill="#fff"/><path d="M2.4 16 L7.7 6.8 L13.6 16 Z" fill="#00f000" stroke="#000" stroke-width="1.2" stroke-linejoin="round"/><path d="M8 7.8 L13 15.4 H8 Z" fill="#00a800"/><path d="M4 15 H12.5 M5 13.6 H11" stroke="#8ab88a" stroke-width="0.7" stroke-dasharray="0.8 0.8"/></svg>
<div style="left:791px;top:413px;width:100px;height:20px;overflow:hidden;">
<div style="left:5px;top:4.86px;font-size:10.5px;line-height:13px;color:#000;text-align:left;white-space:nowrap;">0D_NW_BP</div>
</div>
<svg style="position:absolute;left:773px;top:434px" width="18" height="18" viewBox="0 0 18 18"><rect x="6.1" y="3.1" width="9.8" height="9.5" fill="#6e6e6e"/><rect x="7.0" y="4.0" width="2.1" height="2" fill="#fff"/><rect x="7.0" y="7.0" width="2.1" height="2" fill="#fff"/><rect x="7.0" y="10.0" width="2.1" height="2" fill="#fff"/><rect x="10.1" y="4.0" width="2.1" height="2" fill="#fff"/><rect x="10.1" y="7.0" width="2.1" height="2" fill="#fff"/><rect x="10.1" y="10.0" width="2.1" height="2" fill="#fff"/><rect x="13.2" y="4.0" width="2.1" height="2" fill="#fff"/><rect x="13.2" y="7.0" width="2.1" height="2" fill="#fff"/><rect x="13.2" y="10.0" width="2.1" height="2" fill="#fff"/><path d="M2.4 16 L7.7 6.8 L13.6 16 Z" fill="#00f000" stroke="#000" stroke-width="1.2" stroke-linejoin="round"/><path d="M8 7.8 L13 15.4 H8 Z" fill="#00a800"/><path d="M4 15 H12.5 M5 13.6 H11" stroke="#8ab88a" stroke-width="0.7" stroke-dasharray="0.8 0.8"/></svg>
<div style="left:791px;top:433px;width:100px;height:20px;overflow:hidden;">
<div style="left:5px;top:4.86px;font-size:10.5px;line-height:13px;color:#000;text-align:left;white-space:nowrap;">0D_NW_CA</div>
</div>
<svg style="position:absolute;left:773px;top:454px" width="18" height="18" viewBox="0 0 18 18"><rect x="6.1" y="3.1" width="9.8" height="9.5" fill="#6e6e6e"/><rect x="7.0" y="4.0" width="2.1" height="2" fill="#fff"/><rect x="7.0" y="7.0" width="2.1" height="2" fill="#fff"/><rect x="7.0" y="10.0" width="2.1" height="2" fill="#fff"/><rect x="10.1" y="4.0" width="2.1" height="2" fill="#fff"/><rect x="10.1" y="7.0" width="2.1" height="2" fill="#fff"/><rect x="10.1" y="10.0" width="2.1" height="2" fill="#fff"/><rect x="13.2" y="4.0" width="2.1" height="2" fill="#fff"/><rect x="13.2" y="7.0" width="2.1" height="2" fill="#fff"/><rect x="13.2" y="10.0" width="2.1" height="2" fill="#fff"/><path d="M2.4 16 L7.7 6.8 L13.6 16 Z" fill="#00f000" stroke="#000" stroke-width="1.2" stroke-linejoin="round"/><path d="M8 7.8 L13 15.4 H8 Z" fill="#00a800"/><path d="M4 15 H12.5 M5 13.6 H11" stroke="#8ab88a" stroke-width="0.7" stroke-dasharray="0.8 0.8"/></svg>
<div style="left:791px;top:453px;width:100px;height:20px;overflow:hidden;">
<div style="left:5px;top:4.86px;font-size:10.5px;line-height:13px;color:#000;text-align:left;white-space:nowrap;">0D_NW_CHAT</div>
</div>
<svg style="position:absolute;left:773px;top:474px" width="18" height="18" viewBox="0 0 18 18"><rect x="6.1" y="3.1" width="9.8" height="9.5" fill="#6e6e6e"/><rect x="7.0" y="4.0" width="2.1" height="2" fill="#fff"/><rect x="7.0" y="7.0" width="2.1" height="2" fill="#fff"/><rect x="7.0" y="10.0" width="2.1" height="2" fill="#fff"/><rect x="10.1" y="4.0" width="2.1" height="2" fill="#fff"/><rect x="10.1" y="7.0" width="2.1" height="2" fill="#fff"/><rect x="10.1" y="10.0" width="2.1" height="2" fill="#fff"/><rect x="13.2" y="4.0" width="2.1" height="2" fill="#fff"/><rect x="13.2" y="7.0" width="2.1" height="2" fill="#fff"/><rect x="13.2" y="10.0" width="2.1" height="2" fill="#fff"/><path d="M2.4 16 L7.7 6.8 L13.6 16 Z" fill="#00f000" stroke="#000" stroke-width="1.2" stroke-linejoin="round"/><path d="M8 7.8 L13 15.4 H8 Z" fill="#00a800"/><path d="M4 15 H12.5 M5 13.6 H11" stroke="#8ab88a" stroke-width="0.7" stroke-dasharray="0.8 0.8"/></svg>
<div style="left:791px;top:473px;width:100px;height:20px;overflow:hidden;">
<div style="left:5px;top:4.86px;font-size:10.5px;line-height:13px;color:#000;text-align:left;white-space:nowrap;">0D_NW_CHB</div>
</div>
<svg style="position:absolute;left:773px;top:494px" width="18" height="18" viewBox="0 0 18 18"><rect x="6.1" y="3.1" width="9.8" height="9.5" fill="#6e6e6e"/><rect x="7.0" y="4.0" width="2.1" height="2" fill="#fff"/><rect x="7.0" y="7.0" width="2.1" height="2" fill="#fff"/><rect x="7.0" y="10.0" width="2.1" height="2" fill="#fff"/><rect x="10.1" y="4.0" width="2.1" height="2" fill="#fff"/><rect x="10.1" y="7.0" width="2.1" height="2" fill="#fff"/><rect x="10.1" y="10.0" width="2.1" height="2" fill="#fff"/><rect x="13.2" y="4.0" width="2.1" height="2" fill="#fff"/><rect x="13.2" y="7.0" width="2.1" height="2" fill="#fff"/><rect x="13.2" y="10.0" width="2.1" height="2" fill="#fff"/><path d="M2.4 16 L7.7 6.8 L13.6 16 Z" fill="#00f000" stroke="#000" stroke-width="1.2" stroke-linejoin="round"/><path d="M8 7.8 L13 15.4 H8 Z" fill="#00a800"/><path d="M4 15 H12.5 M5 13.6 H11" stroke="#8ab88a" stroke-width="0.7" stroke-dasharray="0.8 0.8"/></svg>
<div style="left:791px;top:493px;width:100px;height:20px;overflow:hidden;">
<div style="left:5px;top:4.86px;font-size:10.5px;line-height:13px;color:#000;text-align:left;white-space:nowrap;">0D_NW_CRB</div>
</div>
<svg style="position:absolute;left:773px;top:514px" width="18" height="18" viewBox="0 0 18 18"><rect x="6.1" y="3.1" width="9.8" height="9.5" fill="#6e6e6e"/><rect x="7.0" y="4.0" width="2.1" height="2" fill="#fff"/><rect x="7.0" y="7.0" width="2.1" height="2" fill="#fff"/><rect x="7.0" y="10.0" width="2.1" height="2" fill="#fff"/><rect x="10.1" y="4.0" width="2.1" height="2" fill="#fff"/><rect x="10.1" y="7.0" width="2.1" height="2" fill="#fff"/><rect x="10.1" y="10.0" width="2.1" height="2" fill="#fff"/><rect x="13.2" y="4.0" width="2.1" height="2" fill="#fff"/><rect x="13.2" y="7.0" width="2.1" height="2" fill="#fff"/><rect x="13.2" y="10.0" width="2.1" height="2" fill="#fff"/><path d="M2.4 16 L7.7 6.8 L13.6 16 Z" fill="#00f000" stroke="#000" stroke-width="1.2" stroke-linejoin="round"/><path d="M8 7.8 L13 15.4 H8 Z" fill="#00a800"/><path d="M4 15 H12.5 M5 13.6 H11" stroke="#8ab88a" stroke-width="0.7" stroke-dasharray="0.8 0.8"/></svg>
<div style="left:791px;top:513px;width:100px;height:20px;overflow:hidden;">
<div style="left:5px;top:4.86px;font-size:10.5px;line-height:13px;color:#000;text-align:left;white-space:nowrap;">0D_NW_DELD</div>
</div>
<svg style="position:absolute;left:773px;top:534px" width="18" height="18" viewBox="0 0 18 18"><path d="M2.4 12.5 L7.9 3.4 L11 8.5" fill="#fff" stroke="#8a8a8a" stroke-width="1" stroke-dasharray="1.4 0.5"/><path d="M2.4 12.5 H7" stroke="#8a8a8a" stroke-width="1"/><rect x="7.4" y="8.4" width="8" height="7.8" fill="#00dc00" stroke="#000" stroke-width="1.1"/><path d="M9.6 9 V15.6 M12.5 9 V15.6 M8 10.3 H14.8 M8 12.8 H14.8" stroke="#0a9a0a" stroke-width="0.7"/></svg>
<div style="left:791px;top:533px;width:100px;height:20px;overflow:hidden;">
<div style="left:5px;top:4.86px;font-size:10.5px;line-height:13px;color:#000;text-align:left;white-space:nowrap;">0D_NW_GAMT</div>
</div>
<svg style="position:absolute;left:773px;top:554px" width="18" height="18" viewBox="0 0 18 18"><rect x="6.1" y="3.1" width="9.8" height="9.5" fill="#6e6e6e"/><rect x="7.0" y="4.0" width="2.1" height="2" fill="#fff"/><rect x="7.0" y="7.0" width="2.1" height="2" fill="#fff"/><rect x="7.0" y="10.0" width="2.1" height="2" fill="#fff"/><rect x="10.1" y="4.0" width="2.1" height="2" fill="#fff"/><rect x="10.1" y="7.0" width="2.1" height="2" fill="#fff"/><rect x="10.1" y="10.0" width="2.1" height="2" fill="#fff"/><rect x="13.2" y="4.0" width="2.1" height="2" fill="#fff"/><rect x="13.2" y="7.0" width="2.1" height="2" fill="#fff"/><rect x="13.2" y="10.0" width="2.1" height="2" fill="#fff"/><path d="M2.4 16 L7.7 6.8 L13.6 16 Z" fill="#00f000" stroke="#000" stroke-width="1.2" stroke-linejoin="round"/><path d="M8 7.8 L13 15.4 H8 Z" fill="#00a800"/><path d="M4 15 H12.5 M5 13.6 H11" stroke="#8ab88a" stroke-width="0.7" stroke-dasharray="0.8 0.8"/></svg>
<div style="left:791px;top:553px;width:100px;height:20px;overflow:hidden;">
<div style="left:5px;top:4.86px;font-size:10.5px;line-height:13px;color:#000;text-align:left;white-space:nowrap;">0D_NW_IPOS</div>
</div>
<svg style="position:absolute;left:773px;top:574px" width="18" height="18" viewBox="0 0 18 18"><path d="M2.4 12.5 L7.9 3.4 L11 8.5" fill="#fff" stroke="#8a8a8a" stroke-width="1" stroke-dasharray="1.4 0.5"/><path d="M2.4 12.5 H7" stroke="#8a8a8a" stroke-width="1"/><rect x="7.4" y="8.4" width="8" height="7.8" fill="#00dc00" stroke="#000" stroke-width="1.1"/><path d="M9.6 9 V15.6 M12.5 9 V15.6 M8 10.3 H14.8 M8 12.8 H14.8" stroke="#0a9a0a" stroke-width="0.7"/></svg>
<div style="left:791px;top:573px;width:100px;height:20px;overflow:hidden;">
<div style="left:5px;top:4.86px;font-size:10.5px;line-height:13px;color:#000;text-align:left;white-space:nowrap;">0D_NW_NAMT</div>
</div>
<svg style="position:absolute;left:773px;top:594px" width="18" height="18" viewBox="0 0 18 18"><rect x="6.1" y="3.1" width="9.8" height="9.5" fill="#6e6e6e"/><rect x="7.0" y="4.0" width="2.1" height="2" fill="#fff"/><rect x="7.0" y="7.0" width="2.1" height="2" fill="#fff"/><rect x="7.0" y="10.0" width="2.1" height="2" fill="#fff"/><rect x="10.1" y="4.0" width="2.1" height="2" fill="#fff"/><rect x="10.1" y="7.0" width="2.1" height="2" fill="#fff"/><rect x="10.1" y="10.0" width="2.1" height="2" fill="#fff"/><rect x="13.2" y="4.0" width="2.1" height="2" fill="#fff"/><rect x="13.2" y="7.0" width="2.1" height="2" fill="#fff"/><rect x="13.2" y="10.0" width="2.1" height="2" fill="#fff"/><path d="M2.4 16 L7.7 6.8 L13.6 16 Z" fill="#f8f000" stroke="#000" stroke-width="1.2" stroke-linejoin="round"/><path d="M7.7 8.5 V15.8 M5.5 11.5 H10.3 M5 14.3 H10.5" stroke="#0000f0" stroke-width="1.6"/></svg>
<div style="left:791px;top:593px;width:100px;height:20px;overflow:hidden;">
<div style="left:5px;top:4.86px;font-size:10.5px;line-height:13px;color:#000;text-align:left;white-space:nowrap;">0D_NW_PCURR</div>
</div>
<svg style="position:absolute;left:773px;top:614px" width="18" height="18" viewBox="0 0 18 18"><rect x="6.1" y="3.1" width="9.8" height="9.5" fill="#6e6e6e"/><rect x="7.0" y="4.0" width="2.1" height="2" fill="#fff"/><rect x="7.0" y="7.0" width="2.1" height="2" fill="#fff"/><rect x="7.0" y="10.0" width="2.1" height="2" fill="#fff"/><rect x="10.1" y="4.0" width="2.1" height="2" fill="#fff"/><rect x="10.1" y="7.0" width="2.1" height="2" fill="#fff"/><rect x="10.1" y="10.0" width="2.1" height="2" fill="#fff"/><rect x="13.2" y="4.0" width="2.1" height="2" fill="#fff"/><rect x="13.2" y="7.0" width="2.1" height="2" fill="#fff"/><rect x="13.2" y="10.0" width="2.1" height="2" fill="#fff"/><path d="M2.4 16 L7.7 6.8 L13.6 16 Z" fill="#00f000" stroke="#000" stroke-width="1.2" stroke-linejoin="round"/><path d="M8 7.8 L13 15.4 H8 Z" fill="#00a800"/><path d="M4 15 H12.5 M5 13.6 H11" stroke="#8ab88a" stroke-width="0.7" stroke-dasharray="0.8 0.8"/></svg>
<div style="left:791px;top:613px;width:100px;height:20px;overflow:hidden;">
<div style="left:5px;top:4.86px;font-size:10.5px;line-height:13px;color:#000;text-align:left;white-space:nowrap;">0D_NW_PO</div>
</div>
<svg style="position:absolute;left:773px;top:634px" width="18" height="18" viewBox="0 0 18 18"><rect x="6.1" y="3.1" width="9.8" height="9.5" fill="#6e6e6e"/><rect x="7.0" y="4.0" width="2.1" height="2" fill="#fff"/><rect x="7.0" y="7.0" width="2.1" height="2" fill="#fff"/><rect x="7.0" y="10.0" width="2.1" height="2" fill="#fff"/><rect x="10.1" y="4.0" width="2.1" height="2" fill="#fff"/><rect x="10.1" y="7.0" width="2.1" height="2" fill="#fff"/><rect x="10.1" y="10.0" width="2.1" height="2" fill="#fff"/><rect x="13.2" y="4.0" width="2.1" height="2" fill="#fff"/><rect x="13.2" y="7.0" width="2.1" height="2" fill="#fff"/><rect x="13.2" y="10.0" width="2.1" height="2" fill="#fff"/><path d="M2.4 16 L7.7 6.8 L13.6 16 Z" fill="#00f000" stroke="#000" stroke-width="1.2" stroke-linejoin="round"/><path d="M8 7.8 L13 15.4 H8 Z" fill="#00a800"/><path d="M4 15 H12.5 M5 13.6 H11" stroke="#8ab88a" stroke-width="0.7" stroke-dasharray="0.8 0.8"/></svg>
<div style="left:791px;top:633px;width:100px;height:20px;overflow:hidden;">
<div style="left:5px;top:4.86px;font-size:10.5px;line-height:13px;color:#000;text-align:left;white-space:nowrap;">0D_NW_POAS</div>
</div>
<svg style="position:absolute;left:773px;top:654px" width="18" height="18" viewBox="0 0 18 18"><rect x="6.1" y="3.1" width="9.8" height="9.5" fill="#6e6e6e"/><rect x="7.0" y="4.0" width="2.1" height="2" fill="#fff"/><rect x="7.0" y="7.0" width="2.1" height="2" fill="#fff"/><rect x="7.0" y="10.0" width="2.1" height="2" fill="#fff"/><rect x="10.1" y="4.0" width="2.1" height="2" fill="#fff"/><rect x="10.1" y="7.0" width="2.1" height="2" fill="#fff"/><rect x="10.1" y="10.0" width="2.1" height="2" fill="#fff"/><rect x="13.2" y="4.0" width="2.1" height="2" fill="#fff"/><rect x="13.2" y="7.0" width="2.1" height="2" fill="#fff"/><rect x="13.2" y="10.0" width="2.1" height="2" fill="#fff"/><path d="M2.4 16 L7.7 6.8 L13.6 16 Z" fill="#00f000" stroke="#000" stroke-width="1.2" stroke-linejoin="round"/><path d="M8 7.8 L13 15.4 H8 Z" fill="#00a800"/><path d="M4 15 H12.5 M5 13.6 H11" stroke="#8ab88a" stroke-width="0.7" stroke-dasharray="0.8 0.8"/></svg>
<div style="left:791px;top:653px;width:100px;height:20px;overflow:hidden;">
<div style="left:5px;top:4.86px;font-size:10.5px;line-height:13px;color:#000;text-align:left;white-space:nowrap;">0D_NW_POCS</div>
</div>
<svg style="position:absolute;left:773px;top:674px" width="18" height="18" viewBox="0 0 18 18"><rect x="6.1" y="3.1" width="9.8" height="9.5" fill="#6e6e6e"/><rect x="7.0" y="4.0" width="2.1" height="2" fill="#fff"/><rect x="7.0" y="7.0" width="2.1" height="2" fill="#fff"/><rect x="7.0" y="10.0" width="2.1" height="2" fill="#fff"/><rect x="10.1" y="4.0" width="2.1" height="2" fill="#fff"/><rect x="10.1" y="7.0" width="2.1" height="2" fill="#fff"/><rect x="10.1" y="10.0" width="2.1" height="2" fill="#fff"/><rect x="13.2" y="4.0" width="2.1" height="2" fill="#fff"/><rect x="13.2" y="7.0" width="2.1" height="2" fill="#fff"/><rect x="13.2" y="10.0" width="2.1" height="2" fill="#fff"/><path d="M2.4 16 L7.7 6.8 L13.6 16 Z" fill="#00f000" stroke="#000" stroke-width="1.2" stroke-linejoin="round"/><path d="M8 7.8 L13 15.4 H8 Z" fill="#00a800"/><path d="M4 15 H12.5 M5 13.6 H11" stroke="#8ab88a" stroke-width="0.7" stroke-dasharray="0.8 0.8"/></svg>
<div style="left:791px;top:673px;width:100px;height:20px;overflow:hidden;">
<div style="left:5px;top:4.86px;font-size:10.5px;line-height:13px;color:#000;text-align:left;white-space:nowrap;">0D_NW_POLS</div>
</div>
<svg style="position:absolute;left:773px;top:694px" width="18" height="18" viewBox="0 0 18 18"><rect x="6.1" y="3.1" width="9.8" height="9.5" fill="#6e6e6e"/><rect x="7.0" y="4.0" width="2.1" height="2" fill="#fff"/><rect x="7.0" y="7.0" width="2.1" height="2" fill="#fff"/><rect x="7.0" y="10.0" width="2.1" height="2" fill="#fff"/><rect x="10.1" y="4.0" width="2.1" height="2" fill="#fff"/><rect x="10.1" y="7.0" width="2.1" height="2" fill="#fff"/><rect x="10.1" y="10.0" width="2.1" height="2" fill="#fff"/><rect x="13.2" y="4.0" width="2.1" height="2" fill="#fff"/><rect x="13.2" y="7.0" width="2.1" height="2" fill="#fff"/><rect x="13.2" y="10.0" width="2.1" height="2" fill="#fff"/><path d="M2.4 16 L7.7 6.8 L13.6 16 Z" fill="#00f000" stroke="#000" stroke-width="1.2" stroke-linejoin="round"/><path d="M8 7.8 L13 15.4 H8 Z" fill="#00a800"/><path d="M4 15 H12.5 M5 13.6 H11" stroke="#8ab88a" stroke-width="0.7" stroke-dasharray="0.8 0.8"/></svg>
<div style="left:791px;top:693px;width:100px;height:20px;overflow:hidden;">
<div style="left:5px;top:4.86px;font-size:10.5px;line-height:13px;color:#000;text-align:left;white-space:nowrap;">0D_NW_POOS</div>
</div>
<div style="left:757px;top:307px;width:255px;height:415px;box-sizing:border-box;border:1px solid #8fa8c9;"></div>
</div>
<div style="left:757px;top:705px;width:160px;height:17px;box-sizing:border-box;border:1px solid #8ea6c6;border-radius:3px 3px 0 0;background:linear-gradient(#e6eef8,#d3e0f0);"></div>
<div style="left:767px;top:707.76px;font-size:10.8px;line-height:13px;color:#101c44;text-align:left;white-space:nowrap;">Check Date and Time Format</div>
<div style="left:50px;top:705px;width:199px;height:17px;box-sizing:border-box;border:1px solid #8ea6c6;border-radius:3px;background:linear-gradient(#e6eef8,#d3e0f0);"></div>
<div style="left:0.0px;top:707.76px;width:300px;font-size:10.8px;line-height:13px;color:#101c44;text-align:center;white-space:nowrap;">Propose replacements of tech names</div>
<div style="left:259px;top:705px;width:154px;height:17px;box-sizing:border-box;border:1px solid #8ea6c6;border-radius:3px;background:linear-gradient(#e6eef8,#d3e0f0);"></div>
<div style="left:186.5px;top:707.76px;width:300px;font-size:10.8px;line-height:13px;color:#101c44;text-align:center;white-space:nowrap;">Execute consistency checks</div>
<div style="left:424px;top:705px;width:116px;height:17px;box-sizing:border-box;border:1px solid #c7d5e6;border-radius:3px;background:#eef3f9;"></div>
<div style="left:332.0px;top:707.86px;width:300px;font-size:10.5px;line-height:13px;color:#a1a9b5;text-align:center;white-space:nowrap;">Apply target values</div>
<div style="left:550px;top:705px;width:88px;height:17px;box-sizing:border-box;border:1px solid #c7d5e6;border-radius:3px;background:#eef3f9;"></div>
<div style="left:444.0px;top:707.86px;width:300px;font-size:10.5px;line-height:13px;color:#a1a9b5;text-align:center;white-space:nowrap;">Start creation</div>
<div style="left:8px;top:768px;width:1050px;height:31px;background:#cfdcee;box-sizing:border-box;border:1px solid #6e6e6e;"></div>
<div style="left:0px;top:806px;width:1066px;height:1px;background:#a3afbd;"></div>
<div style="left:12px;top:776.86px;font-size:10.5px;line-height:13px;color:#15234a;text-align:left;white-space:nowrap;">Active Project</div>
<div style="left:85px;top:772px;width:100px;height:20px;background:#fff;box-sizing:border-box;border:1px solid #a9bbd3;"></div>
<div style="left:168px;top:773px;width:16px;height:18px;background:linear-gradient(#e4ecf7,#d3dff0);box-sizing:border-box;border-left:1px solid #a9bbd3;"></div>
<svg style="position:absolute;left:171px;top:779px" width="10" height="6" viewBox="0 0 10 6"><path d="M1 1 L9 1 L5 5 Z" fill="#55627a"/></svg>
<div style="left:89px;top:776.86px;font-size:10.5px;line-height:13px;color:#000;text-align:left;white-space:nowrap;">P1</div>
<svg style="position:absolute;left:855px;top:774px" width="17" height="16" viewBox="0 0 17 16"><ellipse cx="6.5" cy="3" rx="6" ry="2.5" fill="#e8e8e8" stroke="#9a9a9a"/><path d="M0.5 3 V12 Q6.5 15.5 12.5 12 V3" fill="#dcdcdc" stroke="#9a9a9a"/><path d="M0.5 6 Q6.5 9 12.5 6 M0.5 9 Q6.5 12 12.5 9" fill="none" stroke="#aaa"/><rect x="7.5" y="7.5" width="8" height="8" fill="#2f8fd0" stroke="#1a5f9a"/><rect x="9" y="8" width="5" height="3" fill="#fff"/><rect x="9.5" y="12" width="4" height="3" fill="#fff"/></svg>
<div style="left:874px;top:775.86px;font-size:10.5px;line-height:13px;color:#15234a;text-align:left;white-space:nowrap;">SQLite</div>
<svg style="position:absolute;left:913px;top:773px" width="17" height="17" viewBox="0 0 17 17"><path d="M1 16 Q1 10.5 8.5 10.5 Q16 10.5 16 16 Z" fill="#c8c8e8" stroke="#5050a0"/><circle cx="8.5" cy="6" r="4" fill="#f3c9a0" stroke="#8a5a30"/><path d="M4.5 5.5 Q5 1.5 8.5 1.5 Q12 1.5 12.5 5 Q10 3.5 6 5 Z" fill="#7a4a20"/></svg>
<div style="left:932px;top:775.86px;font-size:10.5px;line-height:13px;color:#15234a;text-align:left;white-space:nowrap;">Admin (Full administrator)</div>
<div style="left:455px;top:338px;width:155px;height:131px;box-sizing:border-box;border:3px solid #d79f3c;background:linear-gradient(#bfd1e9,#cddbee 40%,#cfdcee);"></div>
<div style="left:462px;top:350.86px;font-size:10.5px;line-height:13px;color:#1e3563;text-align:left;white-space:nowrap;">Result</div>
<svg style="position:absolute;left:580px;top:351px" width="14" height="11" viewBox="0 0 14 11"><path d="M3.5 3 L10.5 8.5 M10.5 3 L3.5 8.5" stroke="#2f343e" stroke-width="3.8" stroke-linecap="round"/><path d="M3.5 3 L10.5 8.5 M10.5 3 L3.5 8.5" stroke="#fff" stroke-width="1.5" stroke-linecap="round"/></svg>
<div style="left:463px;top:368px;width:139px;height:93px;box-sizing:border-box;border:1px solid #7f95b5;background:#cfdcee;"></div>
<svg style="position:absolute;left:476px;top:382px" width="32" height="32" viewBox="0 0 32 32"><circle cx="16" cy="15.5" r="14.8" fill="#1d72c9"/><rect x="15" y="11" width="2" height="12" fill="#fff"/><rect x="15" y="7.5" width="2" height="2" fill="#fff"/></svg>
<div style="left:519px;top:390.86px;font-size:10.5px;line-height:13px;color:#1e3563;text-align:left;white-space:nowrap;">Returncode: 0</div>
<div style="left:495px;top:425px;width:75px;height:23px;box-sizing:border-box;border:1px solid #b3c3d8;border-radius:3px;background:linear-gradient(#f3f7fc,#dce7f4);"></div>
<div style="left:498px;top:428px;width:69px;height:17px;box-sizing:border-box;border:1px dotted #202020;"></div>
<div style="left:382px;top:431.76px;width:300px;font-size:10.8px;line-height:13px;color:#101c44;text-align:center;white-space:nowrap;">OK</div>
<svg style="position:absolute;left:30px;top:54px" width="50" height="38" viewBox="0 0 50 38"><path d="M23.5 6.2 L29.6 9.6 L29.6 14.2 L23.5 17.8 L17.4 14.2 L17.4 9.6 Z" fill="#2f5f9a" stroke="#000" stroke-width="1.1"/><path d="M23.5 7 L28.8 9.8 L23.5 12.8 L18.2 9.8 Z" fill="#6da4dc"/><path d="M18.2 10 L23.5 13 V17 L18.2 14 Z" fill="#5aa8c8"/><path d="M21 8.3 L23.5 9.6 M23.5 8.3 L26 9.6 M19.5 9.8 L22 11 M22.5 10.4 L25 11.7 M25.2 9.2 L27.6 10.4" stroke="#c9e0f5" stroke-width="0.9"/><rect x="12" y="20" width="10" height="10" fill="#7a7a7a"/><path d="M13 21 h2 v2 h-2z M16 21 h2 v2 h-2z M19 21 h2 v2 h-2z M13 24 h2 v2 h-2z M16 24 h2 v2 h-2z M19 24 h2 v2 h-2z M13 27 h2 v2 h-2z M16 27 h2 v2 h-2z M19 27 h2 v2 h-2z" fill="#fff"/><path d="M8.5 33.2 L14 23.8 L19.5 33.2 Z" fill="#10e010" stroke="#000" stroke-width="1.2" stroke-linejoin="round"/><path d="M14 25 L14 32.5" stroke="#0a7a0a" stroke-width="1.6"/><path d="M10.5 31.5 H17.5" stroke="#7ad07a" stroke-width="1" stroke-dasharray="1 1"/><path d="M30.5 25 V22.5 Q30.5 20.3 32.5 20.3 Q34.5 20.3 34.5 22.5 V25" fill="none" stroke="#888" stroke-width="1"/><path d="M29.5 20.8 Q28 19.8 27 21.5 L25 28 M24.5 23.5 H28.5" fill="none" stroke="#1b2ad0" stroke-width="1.4"/><rect x="24.5" y="28.5" width="6.5" height="5" fill="#fff" stroke="#000" stroke-width="1"/><path d="M26 32.5 L28.5 30 M27.5 30 H28.5 V31" stroke="#000" stroke-width="0.9" fill="none"/><rect x="30.8" y="25.3" width="7.2" height="7.7" fill="#18e018" stroke="#000" stroke-width="1.3"/><path d="M32.5 27 h1.2 v1.2 h-1.2z M35 27 h1.2 v1.2 h-1.2z M32.5 29.8 h1.2 v1.2 h-1.2z M35 29.8 h1.2 v1.2 h-1.2z" fill="#fff"/></svg>
<svg style="position:absolute;left:115px;top:54px" width="50" height="38" viewBox="0 0 50 38"><path d="M23.5 11 L16.5 18 M23.5 11 L30.5 18 M15.5 23 L11 28 M15.5 23 L20 28 M31.5 23 L27 28 M31.5 23 L36 28" stroke="#6e6a66" stroke-width="1.1" fill="none"/><rect x="20.5" y="6.5" width="6" height="4" fill="#33a0f0" stroke="#7d756e" stroke-width="1.2"/><rect x="12.5" y="18.5" width="6" height="4" fill="#33a0f0" stroke="#7d756e" stroke-width="1.2"/><rect x="28.5" y="18.5" width="6" height="4" fill="#33a0f0" stroke="#7d756e" stroke-width="1.2"/><rect x="8.5" y="28.5" width="6" height="4" fill="#33a0f0" stroke="#7d756e" stroke-width="1.2"/><rect x="16.5" y="28.5" width="6" height="4" fill="#33a0f0" stroke="#7d756e" stroke-width="1.2"/><rect x="24.5" y="28.5" width="6" height="4" fill="#33a0f0" stroke="#7d756e" stroke-width="1.2"/><rect x="32.5" y="28.5" width="6" height="4" fill="#33a0f0" stroke="#7d756e" stroke-width="1.2"/></svg>
<svg style="position:absolute;left:202px;top:58px" width="40" height="30" viewBox="0 0 40 30"><path d="M15.8 14 C 10 14.2 5.5 18 4.9 22.5 C 4.5 25.5 6.2 27 9 27 L 16.8 27 L 17.9 23.8 L 10.5 23.8 C 9.2 23.8 8.8 23 9.2 21.6 C 10 18.8 12.5 17.2 14.6 16.8 Z" fill="#1066b8"/><path d="M13.8 27 L17.6 27 L21.4 14.3 L17.6 14.3 Z" fill="#1066b8"/><path d="M18 27 L21.6 27 L25.4 14.3 L21.8 14.3 Z" fill="#1aa0e8"/><path d="M21.8 14.3 L29 14.3 C 33.8 14.3 35.6 16.5 35 19.8 C 34.2 23.8 29.8 26.6 24 27 L 25.2 23.7 C 28.6 23.2 30.8 21.6 31.3 19.6 C 31.6 18 30.6 17.4 28.5 17.4 L 22.8 17.4 Z" fill="#1aa0e8"/><path d="M19 17.8 L20.2 7.3 L22.6 9.8 C 25 7 28.8 5.2 32.8 5.3 C 34.8 5.4 36 6.4 35.8 7.8 C 32.8 7.6 29.5 9.2 27.2 12 L28.8 14.6 Z" fill="#f01020" stroke="#c0101c" stroke-width="0.5"/></svg>
<svg style="position:absolute;left:275px;top:58px" width="40" height="30" viewBox="0 0 40 30"><path d="M15.8 14 C 10 14.2 5.5 18 4.9 22.5 C 4.5 25.5 6.2 27 9 27 L 16.8 27 L 17.9 23.8 L 10.5 23.8 C 9.2 23.8 8.8 23 9.2 21.6 C 10 18.8 12.5 17.2 14.6 16.8 Z" fill="#1066b8"/><path d="M13.8 27 L17.6 27 L21.4 14.3 L17.6 14.3 Z" fill="#1066b8"/><path d="M18 27 L21.6 27 L25.4 14.3 L21.8 14.3 Z" fill="#1aa0e8"/><path d="M21.8 14.3 L29 14.3 C 33.8 14.3 35.6 16.5 35 19.8 C 34.2 23.8 29.8 26.6 24 27 L 25.2 23.7 C 28.6 23.2 30.8 21.6 31.3 19.6 C 31.6 18 30.6 17.4 28.5 17.4 L 22.8 17.4 Z" fill="#1aa0e8"/><path d="M18 16.8 C 18.5 11.5 22 8.5 28.2 8 L28.2 4 L36 9.8 L28.8 15.4 L28.8 11.8 C 24 11.8 20.5 13.5 18 16.8 Z" fill="#5ccc1c" stroke="#3a9a10" stroke-width="0.5"/></svg>
<svg style="position:absolute;left:368px;top:60px" width="29" height="29" viewBox="0 0 29 29"><rect x="0.5" y="0.5" width="27" height="27" fill="#fff" stroke="#5b9bd5"/><path d="M4.5 5 V23" stroke="#2b3f8c" stroke-width="1.2" stroke-dasharray="1.2 1.8"/><path d="M7 5.5 H13 M7 9.5 H13 M7 13.5 H13 M7 17.5 H13 M7 21.5 H13 M15 5.5 H21 M15 9.5 H21 M15 13.5 H19 M15 17.5 H18 M15 21.5 H21" stroke="#2b3f8c" stroke-width="1.2"/><path d="M11 16 L15.5 20.5 L25 10 L26.5 12 L15.5 24 L9 17.5 Z" fill="#3fb23f" stroke="#1f7a1f" stroke-width="0.8"/></svg>
<svg style="position:absolute;left:463px;top:58px" width="31" height="31" viewBox="0 0 31 31"><g transform="translate(1,1)"><rect x="0.5" y="0.5" width="16" height="16" fill="#eaf1f8" stroke="#222"/><rect x="1" y="1" width="15" height="2.5" fill="#d6e2ee"/><path d="M1 5.5 H8 M1 8.5 H8 M1 11.5 H8 M1 14.5 H8 M6 1 V16 M9 1 V16" stroke="#a9c0db" stroke-width="0.8"/><rect x="9" y="4" width="7" height="12" fill="#f8e36a"/><path d="M9 6.5 H16 M9 9.5 H16 M9 12.5 H16" stroke="#ef7040" stroke-width="1.1"/></g><rect x="12" y="12" width="18" height="18" fill="#9a9a9a" opacity="0.35"/><g transform="translate(11,11)"><rect x="0.5" y="0.5" width="16" height="16" fill="#eaf1f8" stroke="#222"/><rect x="1" y="1" width="15" height="2.5" fill="#d6e2ee"/><path d="M1 5.5 H8 M1 8.5 H8 M1 11.5 H8 M1 14.5 H8 M6 1 V16 M9 1 V16" stroke="#a9c0db" stroke-width="0.8"/><rect x="9" y="4" width="7" height="12" fill="#f8e36a"/><path d="M9 6.5 H16 M9 9.5 H16 M9 12.5 H16" stroke="#ef7040" stroke-width="1.1"/></g></svg>
<svg style="position:absolute;left:560px;top:54px" width="50" height="38" viewBox="0 0 50 38"><path d="M15 13 V9.5 Q15 7.4 17 7.4 H24" fill="none" stroke="#129412" stroke-width="2.2"/><path d="M22.5 4.5 L29 7.4 L22.5 10.3 Z" fill="#129412"/><path d="M15 27 V30.5 Q15 32.4 17 32.4 H24" fill="none" stroke="#129412" stroke-width="2.2"/><path d="M22.5 29.5 L29 32.4 L22.5 35.3 Z" fill="#129412"/><path d="M11.5 14.5 H17 L20.5 18 V23.5 L18 23.5 L18 25.5 L14.5 25.5 L14.5 23.5 L11.5 23.5 Z" fill="#fff" stroke="#000" stroke-width="1.2"/><path d="M13 16 H17 L19.5 19 V22.5 L16.5 22.5 V24.5 H15.5 V22 H13 Z" fill="#f2e600"/><path d="M18 15.5 L23 11.5 L27 14.5 L22 19.5 Z" fill="#f4f8fc" stroke="#000" stroke-width="1.1"/><path d="M20.5 14.8 L23 12.8 M21.8 15.8 L24.3 13.8" stroke="#1a6fd0" stroke-width="1"/><path d="M22 19.5 L27 14.5 L27 16 L22.5 20.5 Z" fill="#1a6fd0"/><path d="M29.2 16.4 L34 8.3 L38.8 16.4 Z" fill="#14c814" stroke="#000" stroke-width="1.2" stroke-linejoin="round"/><rect x="34.5" y="5" width="6.5" height="6.5" fill="#7a7a7a"/><path d="M35.3 5.8 h1.3 v1.3 h-1.3z M37.3 5.8 h1.3 v1.3 h-1.3z M39.3 5.8 h1.2 v1.3 h-1.2z M37.3 7.8 h1.3 v1.3 h-1.3z M39.3 7.8 h1.2 v1.3 h-1.2z M37.3 9.8 h1.3 v1.2 h-1.3z M39.3 9.8 h1.2 v1.2 h-1.2z" fill="#fff"/><path d="M29.5 31 L33.8 23.3 L37 28.5" fill="#fff" stroke="#777" stroke-width="0.9"/><path d="M29.5 31 H33.5" stroke="#777" stroke-width="0.9"/><rect x="33.4" y="27.4" width="7.3" height="7.3" fill="#10e010" stroke="#000" stroke-width="1.3"/><path d="M35.8 28 V34 M38.2 28 V34 M34 29.8 H40 M34 32.2 H40" stroke="#0a6a0a" stroke-width="0.7"/></svg>
<svg style="position:absolute;left:662px;top:55px" width="40" height="36" viewBox="0 0 40 36"><rect x="5.5" y="5.5" width="29" height="23" fill="#fff" stroke="#a8a8a8" stroke-width="1.2"/><path d="M6.5 29.3 H35.3 V6.5" fill="none" stroke="#d0d0d0" stroke-width="1"/><rect x="7" y="7" width="26" height="4" fill="#dedede"/><rect x="8.5" y="12.5" width="23" height="9" fill="#fff" stroke="#1f80d0" stroke-width="1.3"/><rect x="10.3" y="14.7" width="7.6" height="4" fill="#3a8fdc"/><path d="M19.5 11 V23.5 M17.3 10.8 H21.8" stroke="#444" stroke-width="1"/><path d="M17.3 23.6 H21.8" stroke="#444" stroke-width="1"/></svg>
<svg style="position:absolute;left:728px;top:56px" width="40" height="36" viewBox="0 0 40 36"><rect x="5.5" y="5.5" width="29" height="23" fill="#fff" stroke="#a8a8a8" stroke-width="1.2"/><path d="M6.5 29.3 H35.3 V6.5" fill="none" stroke="#d0d0d0" stroke-width="1"/><rect x="7" y="7" width="26" height="4" fill="#dedede"/><rect x="8.5" y="12.5" width="23" height="9" fill="#fff" stroke="#1f80d0" stroke-width="1.3"/><rect x="10.3" y="14.7" width="7.6" height="4" fill="#3a8fdc"/><path d="M19.5 11 V23.5 M17.3 10.8 H21.8" stroke="#444" stroke-width="1"/><path d="M16.5 15.8 L23.3 15.8 L28 20.5 L28 27.3 L23.3 32 L16.5 32 L11.8 27.3 L11.8 20.5 Z" fill="#f01818" stroke="#c00000" stroke-width="0.6"/><path d="M15.5 26 V20 M17.5 26 V18.5 M19.5 26 V18.3 M21.5 26 V18.8" stroke="#fff" stroke-width="1.4" stroke-linecap="round"/><path d="M15 22 H23 V25 L24.3 23 L25 23.5 L23.5 28.5 Q22 30.5 18.5 30.5 Q15 30.5 15 27 Z" fill="#fff"/></svg>
<svg style="position:absolute;left:806px;top:54px" width="40" height="38" viewBox="0 0 40 38"><rect x="14.2" y="9.9" width="6.8" height="6.4" fill="#777"/><path d="M15 10.7 h1.2 v1.2 h-1.2z M17 10.7 h1.2 v1.2 h-1.2z M19 10.7 h1.2 v1.2 h-1.2z M17 12.7 h1.2 v1.2 h-1.2z M19 12.7 h1.2 v1.2 h-1.2z M19 14.7 h1.2 v1.2 h-1.2z" fill="#fff"/><path d="M9.3 21.4 L14.2 12.8 L18.3 21.4 Z" fill="#6a6a6a" stroke="#000" stroke-width="1.1" stroke-dasharray="1.2 0.6"/><path d="M20.3 24.3 L26.4 17.5 L28 21" fill="#fff" stroke="#888" stroke-width="0.9"/><rect x="24.2" y="20.4" width="7.4" height="7.2" fill="#3a3a3a" stroke="#000" stroke-width="1.2"/><path d="M26.6 21 V27 M29 21 V27 M24.8 22.8 H31 M24.8 25.2 H31" stroke="#aaa" stroke-width="0.6"/><circle cx="20.5" cy="19.3" r="13" fill="none" stroke="#f00010" stroke-width="2.8"/><path d="M11.3 28.5 L29.7 10.1" stroke="#f00010" stroke-width="3.4"/></svg>
<svg style="position:absolute;left:134px;top:209px" width="18" height="18" viewBox="0 0 18 18"><rect x="2.6" y="3.6" width="12.8" height="12.8" fill="#fff" stroke="#000" stroke-width="1.2"/><rect x="3.3" y="4.3" width="11.4" height="3" fill="#e4f0fa"/><path d="M4 7.3 H8.4 M4 10.4 H8.4 M4 13.4 H8.4" stroke="#6a8cc8" stroke-width="0.9"/><path d="M8.5 4.3 V16" stroke="#8aa8d8" stroke-width="0.8"/><rect x="8.8" y="7.5" width="5.9" height="8.2" fill="#fbf07a"/><path d="M8.8 7.4 H14.7" stroke="#777" stroke-width="0.9"/><path d="M8.8 10.4 H14.7 M8.8 13.4 H14.7" stroke="#f00000" stroke-width="1.1"/></svg>
</body></html>
